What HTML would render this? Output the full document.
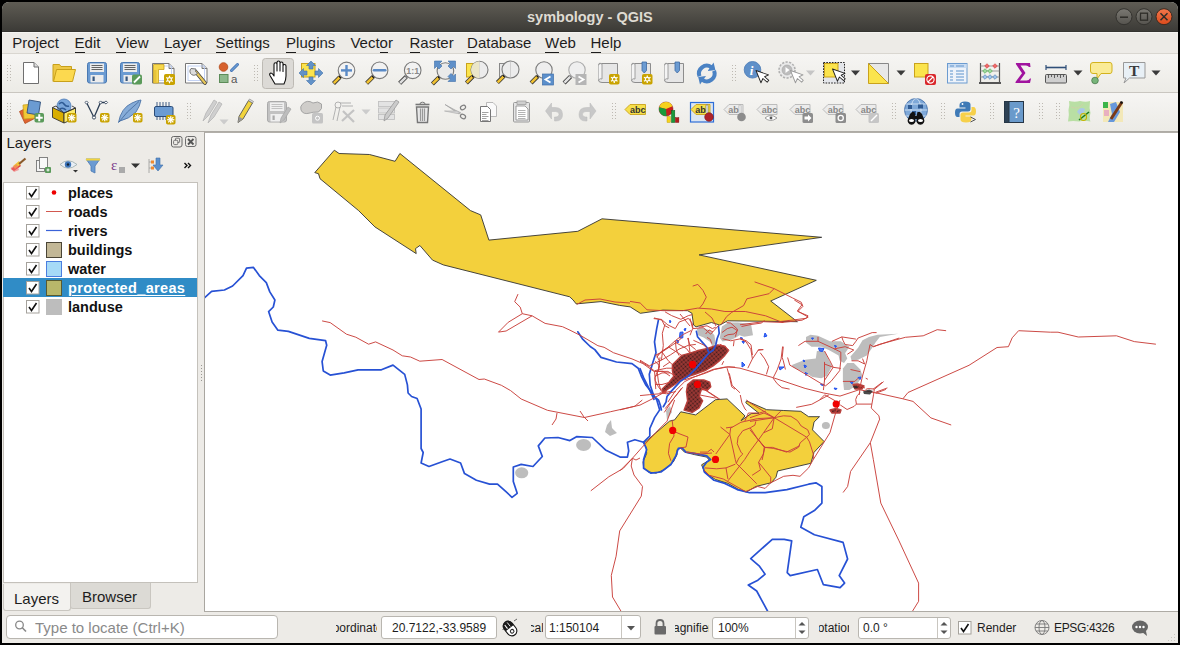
<!DOCTYPE html>
<html><head><meta charset="utf-8">
<style>
*{box-sizing:border-box}
html,body{margin:0;padding:0}
body{width:1180px;height:645px;background:#000;position:relative;overflow:hidden;font-family:"Liberation Sans",sans-serif;color:#1d1d1d}
.a{position:absolute}
.mi{position:absolute;top:35px;font-size:15px;line-height:15px;color:#1d1d1d;white-space:nowrap}
.mi u{text-decoration:none;position:relative}
.mi u:after{content:"";position:absolute;left:0;right:0;bottom:-3px;height:2px;background:#1d1d1d}
.tb{left:2px;width:1176px;height:38px;background:linear-gradient(#f6f5f3,#ecebe6)}
.lyr{left:68px;font-size:14.5px;line-height:15px;font-weight:bold;white-space:nowrap}
.box{background:#fff;border:1px solid #b9b6b0;border-radius:3px}
.st{font-size:12px;line-height:13px;white-space:nowrap;color:#1d1d1d}
svg{position:absolute;left:0;top:0;overflow:visible}
</style></head><body>
<div class="a" style="left:2px;top:2px;width:1176px;height:641px;background:#edebe7;border-radius:7px 7px 0 0"></div>
<div class="a" style="left:2px;top:2px;width:1176px;height:30px;border-radius:7px 7px 0 0;background:linear-gradient(#5f5c54,#3c3b37 96%,#2e2d2a)"></div>
<div class="a" style="left:2px;top:32px;width:1176px;height:1px;background:#f5f4f1"></div>
<div class="a" style="left:527px;top:10px;font-size:14.5px;line-height:15px;font-weight:bold;color:#dfdbd2">symbology - QGIS</div>
<span class="mi" style="left:12.2px">Pro<u>j</u>ect</span>
<span class="mi" style="left:74.6px"><u>E</u>dit</span>
<span class="mi" style="left:116.0px"><u>V</u>iew</span>
<span class="mi" style="left:164.0px"><u>L</u>ayer</span>
<span class="mi" style="left:215.6px"><u>S</u>ettings</span>
<span class="mi" style="left:286.1px"><u>P</u>lugins</span>
<span class="mi" style="left:350.4px">Vect<u>o</u>r</span>
<span class="mi" style="left:409.5px"><u>R</u>aster</span>
<span class="mi" style="left:467.1px"><u>D</u>atabase</span>
<span class="mi" style="left:545.0px"><u>W</u>eb</span>
<span class="mi" style="left:590.5px"><u>H</u>elp</span>

<div class="a" style="left:2px;top:53px;width:1176px;height:1px;background:#d9d6d0"></div>
<div class="a tb" style="top:54px"></div>
<div class="a" style="left:2px;top:92px;width:1176px;height:1px;background:#c9c6c0"></div>
<div class="a tb" style="top:93px"></div>
<div class="a" style="left:2px;top:131px;width:1176px;height:1px;background:#aeaba5"></div>

<div class="a" style="left:6.5px;top:134.5px;font-size:15px;line-height:15px;color:#1d1d1d">Layers</div>
<div class="a" style="left:3px;top:182px;width:195px;height:401px;background:#fff;border:1px solid #c4c1bb"></div>
<div class="a lyr" style="top:186px;color:#111;">places</div><div class="a lyr" style="top:205px;color:#111;">roads</div><div class="a lyr" style="top:224px;color:#111;">rivers</div><div class="a lyr" style="top:243px;color:#111;">buildings</div><div class="a lyr" style="top:262px;color:#111;">water</div><div class="a" style="left:3px;top:278px;width:194px;height:19px;background:#308cc6"></div><div class="a lyr" style="top:281px;color:#fff;text-decoration:underline;text-underline-offset:1.5px;text-decoration-thickness:1px;letter-spacing:0.35px;">protected_areas</div><div class="a lyr" style="top:300px;color:#111;">landuse</div>
<div class="a" style="left:3px;top:584px;width:68px;height:27px;background:#f3f2ef;border:1px solid #c9c6c0;border-top:none;border-radius:0 0 3px 3px"></div>
<div class="a" style="left:70px;top:583px;width:81px;height:26px;background:#dcdad5;border:1px solid #c9c6c0;border-top:none;border-radius:0 0 3px 3px"></div>
<div class="a" style="left:14px;top:590.5px;font-size:15px;line-height:15px">Layers</div>
<div class="a" style="left:82px;top:589px;font-size:15px;line-height:15px">Browser</div>

<div class="a" style="left:204px;top:132px;width:974px;height:480px;background:#fff;border-left:1px solid #a9a6a0;border-top:1px solid #b2afa9"></div>

<div class="a" style="left:204px;top:611px;width:974px;height:1px;background:#aeaba5"></div>
<div class="a box" style="left:6px;top:615px;width:272px;height:24px;border-radius:4px"></div>
<div class="a" style="left:35px;top:620px;font-size:15px;line-height:15px;color:#8a8a8a;white-space:nowrap">Type to locate (Ctrl+K)</div>
<div class="a st" style="left:336px;top:622px;width:41px;overflow:hidden"><span style="margin-left:-12px">Coordinate</span></div>
<div class="a box" style="left:381px;top:616px;width:116px;height:23px"></div>
<div class="a st" style="left:392px;top:622px">20.7122,-33.9589</div>
<div class="a st" style="left:531px;top:622px;width:12px;overflow:hidden"><span style="margin-left:-10.5px">Scale</span></div>
<div class="a box" style="left:545px;top:615px;width:96px;height:24px"></div>
<div class="a" style="left:621px;top:616px;width:1px;height:22px;background:#c9c6c0"></div>
<div class="a st" style="left:549px;top:622px">1:150104</div>
<div class="a st" style="left:675px;top:622px;width:34px;overflow:hidden"><span style="margin-left:-12px">Magnifier</span></div>
<div class="a box" style="left:712px;top:617px;width:97px;height:22px"></div>
<div class="a" style="left:795px;top:618px;width:1px;height:20px;background:#c9c6c0"></div>
<div class="a st" style="left:718px;top:622px">100%</div>
<div class="a st" style="left:819px;top:622px;width:30px;overflow:hidden"><span style="margin-left:-10px">Rotation</span></div>
<div class="a box" style="left:858px;top:617px;width:93px;height:22px"></div>
<div class="a" style="left:937px;top:618px;width:1px;height:20px;background:#c9c6c0"></div>
<div class="a st" style="left:863px;top:622px">0.0 °</div>
<div class="a st" style="left:977px;top:622px">Render</div>
<div class="a st" style="left:1054px;top:622px;letter-spacing:-0.35px">EPSG:4326</div>

<svg width="1180" height="645" viewBox="0 0 1180 645">
<defs><clipPath id="mapclip"><rect x="205" y="133" width="972" height="478"/></clipPath></defs>
<g clip-path="url(#mapclip)"><defs><pattern id="tp" width="3" height="3" patternUnits="userSpaceOnUse" patternTransform="rotate(-40)"><rect width="3" height="3" fill="#b8403c"/><rect x="0.5" y="0.5" width="2" height="2" fill="#3a1a1a"/></pattern></defs><path d="M696.8,328.6 L703.6,327.9 L710.3,330.6 L714.4,335.3 L715.8,343.5 L712.4,346.9 L710.3,342.1 L703.6,337.4 L698.1,335.3 Z" fill="#bdbdbd"/><path d="M721.9,326.5 L728.0,322.5 L737.5,322.5 L751.0,323.8 L753.0,335.3 L744.2,336.7 L739.5,335.3 L736.1,337.4 L730.7,340.1 L722.5,341.4 L719.8,337.9 Z" fill="#bdbdbd"/><path d="M806.0,336.9 L810.4,334.8 L818.0,335.8 L829.9,341.3 L840.8,341.3 L849.4,346.7 L845.1,353.2 L847.3,358.6 L844.0,363.0 L839.7,360.8 L838.6,355.4 L828.8,350.0 L821.2,346.7 L811.5,346.7 L806.0,342.4 Z" fill="#bdbdbd"/><path d="M791.9,365.1 L805.0,359.7 L815.8,358.6 L816.9,351.0 L824.5,351.0 L827.7,357.5 L832.1,366.2 L826.7,376.0 L821.2,378.2 L812.5,377.1 L805.0,372.7 L793.0,367.3 Z" fill="#bdbdbd"/><path d="M850.5,356.5 L858.1,347.8 L862.5,340.2 L869.0,336.9 L877.6,334.8 L898.3,333.7 L879.8,336.9 L875.5,342.4 L872.2,347.8 L866.8,355.4 L858.1,359.7 L851.6,360.8 Z" fill="#bdbdbd"/><path d="M842.9,368.4 L847.3,363.0 L853.8,363.0 L860.3,369.5 L862.5,376.0 L856.0,385.8 L849.4,390.1 L844.0,390.1 L842.9,379.3 Z" fill="#bdbdbd"/><path d="M607.0,425.0 L611.0,420.0 L612.0,428.0 L617.0,433.0 L610.0,436.0 L605.0,432.0 Z" fill="#bdbdbd"/><path d="M666.0,411.0 L670.0,406.0 L672.0,412.0 L667.0,420.0 Z" fill="#bdbdbd"/><ellipse cx="521.7" cy="472.8" rx="6.6" ry="5.5" fill="#bdbdbd"/><ellipse cx="583.6" cy="445.1" rx="7.5" ry="6" fill="#bdbdbd"/><ellipse cx="825.9" cy="425.4" rx="4" ry="3.5" fill="#bdbdbd"/><path d="M314.8,172.6 L334.3,150.2 L339.1,153.5 L369.5,154.5 L395.1,161.3 L399.9,153.5 L470.5,210.6 L480.7,214.9 L488.9,240.1 L577.8,231.3 L602.0,218.8 L821.7,237.3 L699.1,254.9 L816.3,280.3 L770.7,301.0 L797.4,321.7 L727.5,320.8 L719.8,325.1 L711.4,322.5 L696.1,326.8 L693.6,325.1 L691.9,313.2 L687.6,310.7 L663.0,310.1 L640.3,313.3 L630.2,306.9 L619.6,305.4 L601.0,301.6 L576.2,303.9 L573.1,300.0 L569.7,296.8 L443.3,264.9 L432.5,260.1 L419.9,245.5 L415.5,248.6 L416.2,253.6 L374.9,226.9 L358.6,210.6 L320.0,178.7 L318.5,173.7 Z" fill="#f3d03c" stroke="#333" stroke-width="0.9" stroke-linejoin="miter"/><path d="M643.6,443.4 L669.6,421.1 L674.6,419.9 L680.8,411.8 L695.7,414.9 L715.5,399.7 L727.1,398.9 L745.0,415.9 L741.1,420.6 L751.2,413.6 L759.0,413.3 L745.8,402.8 L746.5,400.9 L766.7,409.7 L783.8,410.5 L800.8,411.3 L808.6,416.7 L819.5,416.7 L814.0,422.1 L812.5,429.9 L824.1,441.5 L814.0,452.4 L810.9,463.3 L777.6,471.0 L776.0,477.2 L771.4,482.7 L755.8,486.5 L746.5,492.0 L738.8,489.6 L727.9,483.4 L715.5,479.5 L704.7,472.6 L701.6,464.8 L709.3,460.2 L706.8,457.1 L694.4,454.6 L684.5,452.1 L680.8,448.4 L677.1,449.6 L677.1,454.6 L673.3,462.0 L664.7,469.5 L656.0,473.2 L648.5,472.0 L643.6,467.6 L643.0,462.0 L646.7,453.3 L646.1,447.1 Z" fill="#f3d03c" stroke="#333" stroke-width="0.9"/><path d="M680.0,332.3 L683.0,332.0 L682.8,337.9 L679.5,338.0 Z" fill="#4a78f0" stroke="#1f4ff0" stroke-width="1"/><path d="M676.5,340.5 L678.5,340.5 L678.0,343.0 Z" fill="#4a78f0" stroke="#1f4ff0" stroke-width="1"/><path d="M684.0,329.0 L686.0,328.5 L685.0,331.0 Z" fill="#4a78f0" stroke="#1f4ff0" stroke-width="1"/><path d="M669.5,320.5 L671.0,321.0 L670.0,323.0 Z" fill="#4a78f0" stroke="#1f4ff0" stroke-width="1"/><path d="M740.5,337.5 L742.5,338.0 L741.5,340.0 Z" fill="#4a78f0" stroke="#1f4ff0" stroke-width="1"/><path d="M742.0,341.5 L744.5,341.5 L743.5,343.5 Z" fill="#4a78f0" stroke="#1f4ff0" stroke-width="1"/><path d="M765.0,333.0 L767.0,336.0 L764.0,337.0 Z" fill="#4a78f0" stroke="#1f4ff0" stroke-width="1"/><path d="M811.5,338.0 L813.5,338.0 L812.5,339.5 Z" fill="#4a78f0" stroke="#1f4ff0" stroke-width="1"/><path d="M818.5,348.0 L824.0,348.5 L822.5,351.5 L819.5,351.0 Z" fill="#4a78f0" stroke="#1f4ff0" stroke-width="1"/><path d="M834.5,345.5 L836.5,346.0 L835.5,347.5 Z" fill="#4a78f0" stroke="#1f4ff0" stroke-width="1"/><path d="M803.0,360.0 L805.0,361.0 L804.0,362.0 Z" fill="#4a78f0" stroke="#1f4ff0" stroke-width="1"/><path d="M804.0,365.0 L806.5,366.0 L805.0,368.0 Z" fill="#4a78f0" stroke="#1f4ff0" stroke-width="1"/><path d="M805.0,372.5 L807.5,373.5 L806.0,375.5 Z" fill="#4a78f0" stroke="#1f4ff0" stroke-width="1"/><path d="M820.5,384.0 L824.0,384.5 L822.5,386.0 Z" fill="#4a78f0" stroke="#1f4ff0" stroke-width="1"/><path d="M834.0,388.0 L837.0,388.5 L835.5,390.0 Z" fill="#4a78f0" stroke="#1f4ff0" stroke-width="1"/><path d="M850.0,381.5 L853.0,382.0 L852.0,384.0 Z" fill="#4a78f0" stroke="#1f4ff0" stroke-width="1"/><path d="M858.0,377.5 L861.0,377.0 L860.0,379.5 Z" fill="#4a78f0" stroke="#1f4ff0" stroke-width="1"/><path d="M742.0,362.0 L745.0,365.0 L742.0,367.0 Z" fill="#4a78f0" stroke="#1f4ff0" stroke-width="1"/><path d="M779.0,367.0 L784.0,367.0 L780.0,370.0 Z" fill="#4a78f0" stroke="#1f4ff0" stroke-width="1"/><path d="M672.4,364.7 L681.7,355.4 L689.9,353.1 L696.9,350.8 L707.3,348.5 L717.8,345.0 L724.8,346.1 L728.3,350.8 L724.8,355.4 L719.0,361.3 L713.1,365.9 L705.0,370.6 L695.7,374.0 L688.7,376.4 L680.6,379.9 L674.8,384.5 L667.8,389.2 L663.1,392.7 L662.0,389.2 L669.0,382.2 L673.6,376.4 L672.4,370.6 Z" fill="url(#tp)" stroke="#b8403c" stroke-width="1.4" stroke-linejoin="round"/><path d="M687.6,384.5 L693.4,379.9 L703.8,379.9 L709.7,382.2 L710.8,386.8 L707.3,390.3 L701.5,389.2 L699.2,396.1 L702.7,400.8 L699.2,407.8 L692.2,412.4 L684.1,410.1 L687.6,400.8 L686.4,391.5 Z" fill="url(#tp)" stroke="#b8403c" stroke-width="1.4" stroke-linejoin="round"/><path d="M830.0,410.0 L836.0,408.5 L841.0,410.0 L840.0,413.0 L832.0,413.0 Z" fill="url(#tp)" stroke="#b8403c" stroke-width="1.4" stroke-linejoin="round"/><path d="M853.0,384.5 L858.0,384.0 L864.0,386.0 L862.0,389.0 L855.0,389.0 Z" fill="url(#tp)" stroke="#b8403c" stroke-width="1.4" stroke-linejoin="round"/><path d="M204.7,297.7 L211.6,291.4 L224.4,290.0 L232.6,286.0 L243.0,275.6 L246.5,268.1 L253.5,267.4 L259.3,275.6 L266.3,282.6 L269.8,291.9 L274.9,300.0 L273.3,307.0 L268.6,311.6 L272.1,322.0 L277.9,330.2 L288.4,331.4 L309.3,338.4 L325.6,340.7 L326.7,345.3 L322.1,361.6 L323.3,371.0 L330.2,375.1 L344.2,372.8 L358.1,369.8 L381.4,369.8 L393.0,365.1 L404.7,374.4 L407.4,384.9 L408.1,393.0 L411.6,396.5 L417.1,398.5 L421.1,409.0 L421.1,448.5 L423.2,452.5 L421.1,463.0 L429.0,466.5 L442.1,461.7 L450.0,459.0 L460.6,463.0 L464.5,473.6 L476.4,480.2 L489.6,484.1 L497.5,484.1 L505.4,491.2 L512.0,497.3 L517.2,493.3 L513.3,481.5 L513.3,467.0 L521.2,464.4 L533.0,466.5 L542.3,456.5 L538.3,445.9 L544.9,438.0 L558.0,437.5 L569.9,440.6 L576.5,436.7 L592.3,437.5 L605.5,449.9 L620.0,457.1 L627.4,457.1 L628.7,450.9 L627.4,442.2 L634.9,439.7 L643.6,442.2" fill="none" stroke="#2751d4" stroke-width="1.7" stroke-linejoin="round" stroke-linecap="round"/><path d="M577.8,331.8 L582.4,338.8 L590.2,346.5 L594.8,349.6 L601.0,357.4 L616.5,362.0 L632.0,363.6 L638.2,368.2 L641.3,376.0 L646.0,385.3 L652.2,393.0 L656.8,400.0 L659.7,409.9 L654.7,417.4 L649.8,428.5 L649.8,436.0 L643.6,442.2" fill="none" stroke="#2751d4" stroke-width="1.7" stroke-linejoin="round" stroke-linecap="round"/><path d="M658.4,320.2 L656.7,328.6 L654.5,341.9 L656.0,352.7 L653.0,362.1 L649.3,374.2 L650.2,385.3 L654.0,396.5 L658.6,400.2 L660.5,405.8 L661.4,410.0" fill="none" stroke="#2751d4" stroke-width="1.7" stroke-linejoin="round" stroke-linecap="round"/><path d="M643.6,442.2 L646.7,449.6 L643.6,459.6 L643.6,468.2 L651.0,473.2 L660.9,472.0 L670.9,464.5 L675.8,455.8 L678.3,448.4 L682.0,447.8 L685.8,452.1 L694.4,453.3 L706.8,455.8 L710.6,459.6 L706.8,462.0 L703.1,467.0 L704.4,472.0 L714.0,480.3 L724.8,483.4 L737.2,489.6 L749.6,492.7 L765.2,492.7 L786.9,489.6 L808.6,484.2 L815.9,482.8 L821.9,486.5 L821.9,503.1 L814.4,510.6 L803.8,516.7 L800.8,527.3 L814.4,534.8 L843.1,542.4 L847.6,559.0 L839.2,575.6 L844.6,583.1 L840.1,587.7 L823.4,584.7 L817.4,569.5 L790.2,575.6 L787.2,572.6 L791.7,540.8 L784.2,539.3 L772.3,539.3 L750.7,558.6 L759.1,565.8 L765.1,574.2 L757.9,580.2 L748.3,585.0 L756.7,591.0 L767.5,611.0" fill="none" stroke="#2751d4" stroke-width="1.7" stroke-linejoin="round" stroke-linecap="round"/><path d="M696.4,331.3 L697.5,336.7 L702.2,342.1 L707.0,347.5 L708.3,351.6" fill="none" stroke="#2751d4" stroke-width="1.7" stroke-linejoin="round" stroke-linecap="round"/><path d="M718.5,326.5 L719.2,333.3 L717.1,338.7 L715.8,344.8 L713.1,350.3 L709.0,353.0 L705.1,357.4 L695.8,368.6 L688.4,376.0 L680.0,381.6 L670.7,391.9 L667.0,396.5 L666.0,402.1 L663.3,406.7" fill="none" stroke="#2751d4" stroke-width="1.7" stroke-linejoin="round" stroke-linecap="round"/><path d="M640.0,368.6 L643.7,377.9 L649.3,389.1 L654.0,399.3" fill="none" stroke="#2751d4" stroke-width="1.7" stroke-linejoin="round" stroke-linecap="round"/><path d="M322.1,320.9 L330.2,322.6 L346.5,334.2 L355.8,337.2 L368.6,344.2 L375.6,341.9 L393.0,350.0 L402.3,355.8 L410.5,357.0 L419.8,361.2 L442.1,359.5 L479.0,379.5 L484.3,379.0 L501.4,385.3 L510.6,390.6 L521.2,399.0 L547.5,410.3 L584.4,417.5 L610.7,411.7 L640.0,405.1 L654.0,398.0 L663.0,393.0 L670.0,391.5" fill="none" stroke="#c9403b" stroke-width="0.95" stroke-linejoin="round"/><path d="M518.0,294.1 L514.7,301.7 L520.2,307.1 L522.3,313.7 L532.1,315.8 L545.1,323.4 L562.5,326.7 L570.0,330.2 L580.9,335.7 L597.9,345.7 L604.1,347.3 L613.4,352.7 L632.0,358.9 L642.9,363.6 L653.7,371.3 L663.0,371.3 L670.0,376.0" fill="none" stroke="#c9403b" stroke-width="0.95" stroke-linejoin="round"/><path d="M522.3,313.7 L508.2,322.3 L498.5,332.1 L506.1,331.0 L532.1,315.8" fill="none" stroke="#c9403b" stroke-width="0.95" stroke-linejoin="round"/><path d="M552.0,425.0 L556.0,419.0 L557.0,413.0" fill="none" stroke="#c9403b" stroke-width="0.95" stroke-linejoin="round"/><path d="M580.0,411.0 L584.0,417.0 L588.0,421.0" fill="none" stroke="#c9403b" stroke-width="0.95" stroke-linejoin="round"/><path d="M667.9,402.1 L675.3,390.9 L684.7,381.6 L694.0,377.0 L705.1,373.3 L714.4,369.5 L728.4,366.7 L740.0,368.2 L772.6,377.5 L805.1,388.4 L823.7,393.0 L840.0,396.1 L859.3,389.7 L880.0,393.7 L902.9,398.8 L913.0,401.4 L930.9,417.9 L951.2,425.0" fill="none" stroke="#c9403b" stroke-width="0.95" stroke-linejoin="round"/><path d="M665.1,408.6 L675.3,396.5 L682.8,387.2" fill="none" stroke="#c9403b" stroke-width="0.95" stroke-linejoin="round"/><path d="M640.0,395.6 L649.3,394.7 L660.5,393.7 L667.0,390.9" fill="none" stroke="#c9403b" stroke-width="0.95" stroke-linejoin="round"/><path d="M640.0,361.2 L649.3,366.7 L654.9,371.4 L667.9,371.4 L675.3,376.0" fill="none" stroke="#c9403b" stroke-width="0.95" stroke-linejoin="round"/><path d="M902.9,398.8 L908.0,392.5 L969.0,365.3 L997.0,347.5 L1008.4,346.7 L1012.2,337.8 L1018.6,330.7 L1050.4,332.2 L1058.0,332.2 L1078.3,337.0 L1116.5,335.8 L1134.3,341.6 L1155.9,344.2" fill="none" stroke="#c9403b" stroke-width="0.95" stroke-linejoin="round"/><path d="M674.6,400.0 L667.1,421.1 L656.0,432.3 L642.3,447.1 L632.4,458.3 L620.0,470.7" fill="none" stroke="#c9403b" stroke-width="0.95" stroke-linejoin="round"/><path d="M632.4,458.3 L631.2,466.0 L634.0,475.0 L642.5,486.4 L641.3,496.1 L619.7,530.9 L616.1,556.2 L611.3,575.4 L612.5,597.0 L620.9,611.0" fill="none" stroke="#c9403b" stroke-width="0.95" stroke-linejoin="round"/><path d="M590.8,490.8 L608.8,476.8 L623.3,468.4 L632.4,458.3" fill="none" stroke="#c9403b" stroke-width="0.95" stroke-linejoin="round"/><path d="M632.4,458.3 L636.0,460.0 L640.0,458.0" fill="none" stroke="#c9403b" stroke-width="0.95" stroke-linejoin="round"/><path d="M620.0,409.9 L634.9,406.2 L642.3,400.0" fill="none" stroke="#c9403b" stroke-width="0.95" stroke-linejoin="round"/><path d="M879.3,420.0 L870.3,442.7 L850.6,471.4 L847.6,486.5 L843.1,492.5" fill="none" stroke="#c9403b" stroke-width="0.95" stroke-linejoin="round"/><path d="M870.3,442.7 L873.3,459.3 L880.8,503.1 L899.0,540.8 L918.6,583.1 L918.6,601.3 L912.6,611.0" fill="none" stroke="#c9403b" stroke-width="0.95" stroke-linejoin="round"/><path d="M813.3,459.5 L830.0,432.6 L835.0,415.0 L840.0,400.0" fill="none" stroke="#c9403b" stroke-width="0.95" stroke-linejoin="round"/><path d="M796.2,407.4 L811.7,404.3 L828.8,395.0" fill="none" stroke="#c9403b" stroke-width="0.95" stroke-linejoin="round"/><path d="M700.0,395.0 L715.5,398.1" fill="none" stroke="#c9403b" stroke-width="0.95" stroke-linejoin="round"/><path d="M740.3,395.0 L741.9,402.8 L745.0,409.0 L746.5,410.5" fill="none" stroke="#c9403b" stroke-width="0.95" stroke-linejoin="round"/><path d="M630.0,301.4 L640.2,303.0 L647.0,309.8 L663.9,310.7 L682.5,310.7 L697.8,308.1 L711.4,309.0 L724.9,311.5 L745.3,311.5 L765.6,315.8 L782.5,322.5" fill="none" stroke="#c9403b" stroke-width="0.95" stroke-linejoin="round"/><path d="M692.7,286.1 L697.8,284.4 L702.9,290.3 L706.3,297.1 L702.9,303.9 L699.5,308.1" fill="none" stroke="#c9403b" stroke-width="0.95" stroke-linejoin="round"/><path d="M754.6,281.9 L774.1,288.6 L769.0,293.7 L746.9,298.8 L743.6,305.6 L731.7,312.4 L726.6,316.6 L721.5,324.2" fill="none" stroke="#c9403b" stroke-width="0.95" stroke-linejoin="round"/><path d="M774.1,288.6 L792.7,298.0 L801.2,302.2 L802.9,306.4 L797.8,311.5 L808.0,315.8 L806.3,318.3 L779.2,321.7" fill="none" stroke="#c9403b" stroke-width="0.95" stroke-linejoin="round"/><path d="M576.8,304.4 L585.0,300.0 L600.0,299.0 L615.0,302.0 L630.0,303.0" fill="none" stroke="#c9403b" stroke-width="0.95" stroke-linejoin="round"/><path d="M794.3,300.0 L802.0,304.7 L797.4,310.9 L808.2,317.1 L802.0,320.2 L781.9,322.5" fill="none" stroke="#c9403b" stroke-width="0.95" stroke-linejoin="round"/><path d="M740.0,324.8 L763.3,321.7 L783.4,322.5" fill="none" stroke="#c9403b" stroke-width="0.95" stroke-linejoin="round"/><path d="M705.0,312.0 L712.0,318.0 L716.0,326.0" fill="none" stroke="#c9403b" stroke-width="0.95" stroke-linejoin="round"/><path d="M680.0,314.0 L685.0,320.0 L690.0,326.0" fill="none" stroke="#c9403b" stroke-width="0.95" stroke-linejoin="round"/><path d="M780.7,411.2 L774.2,417.7 L758.4,440.0 L750.0,451.2 L744.7,459.5 L727.9,480.9" fill="none" stroke="#c9403b" stroke-width="0.95" stroke-linejoin="round"/><path d="M746.5,400.0 L750.0,402.8 L774.2,417.7 L806.7,437.2 L809.5,441.9 L813.3,454.0 L813.3,459.5" fill="none" stroke="#c9403b" stroke-width="0.95" stroke-linejoin="round"/><path d="M774.2,417.7 L783.5,415.8 L790.9,416.3 L797.4,420.5 L801.2,426.0 L807.7,429.8 L809.5,434.4 L806.7,437.2 L800.2,442.8 L798.4,447.4 L790.0,452.1 L785.3,451.2 L773.3,448.4 L764.9,447.4 L758.4,440.0 L750.0,429.8" fill="none" stroke="#c9403b" stroke-width="0.95" stroke-linejoin="round"/><path d="M750.0,421.4 L774.2,417.7" fill="none" stroke="#c9403b" stroke-width="0.95" stroke-linejoin="round"/><path d="M750.0,417.7 L764.0,413.0 L774.2,417.7" fill="none" stroke="#c9403b" stroke-width="0.95" stroke-linejoin="round"/><path d="M764.9,447.4 L762.1,460.0" fill="none" stroke="#c9403b" stroke-width="0.95" stroke-linejoin="round"/><path d="M774.2,417.7 L772.3,428.8 L764.0,432.6" fill="none" stroke="#c9403b" stroke-width="0.95" stroke-linejoin="round"/><path d="M720.5,427.0 L729.8,434.4 L730.7,427.9 L732.6,427.0 L740.9,422.3 L744.7,421.4 L757.7,418.6 L774.2,417.7" fill="none" stroke="#c9403b" stroke-width="0.95" stroke-linejoin="round"/><path d="M726.0,427.9 L732.6,427.0" fill="none" stroke="#c9403b" stroke-width="0.95" stroke-linejoin="round"/><path d="M729.8,434.4 L735.3,459.5 L736.3,463.3 L756.7,483.7" fill="none" stroke="#c9403b" stroke-width="0.95" stroke-linejoin="round"/><path d="M744.7,421.4 L748.4,413.0 L759.5,413.0 L766.0,411.0" fill="none" stroke="#c9403b" stroke-width="0.95" stroke-linejoin="round"/><path d="M755.8,421.4 L754.9,425.1 L750.2,427.9 L742.8,430.7 L738.1,437.2 L737.2,443.7 L740.9,452.1 L742.8,454.0 L739.1,457.7 L736.3,463.3" fill="none" stroke="#c9403b" stroke-width="0.95" stroke-linejoin="round"/><path d="M750.2,427.9 L757.7,439.1 L765.1,447.4" fill="none" stroke="#c9403b" stroke-width="0.95" stroke-linejoin="round"/><path d="M758.6,440.0 L764.2,447.4 L763.3,454.0 L758.6,462.3 L760.5,469.8 L752.1,475.3" fill="none" stroke="#c9403b" stroke-width="0.95" stroke-linejoin="round"/><path d="M764.2,447.4 L772.6,447.4 L786.5,452.1 L800.0,445.6" fill="none" stroke="#c9403b" stroke-width="0.95" stroke-linejoin="round"/><path d="M758.6,462.3 L770.7,477.2 L770.7,482.8" fill="none" stroke="#c9403b" stroke-width="0.95" stroke-linejoin="round"/><path d="M715.8,454.0 L729.8,434.4" fill="none" stroke="#c9403b" stroke-width="0.95" stroke-linejoin="round"/><path d="M700.0,452.1 L707.4,452.1 L711.2,449.3 L714.0,452.0" fill="none" stroke="#c9403b" stroke-width="0.95" stroke-linejoin="round"/><path d="M704.7,467.9 L716.7,468.8 L726.0,467.9 L735.3,464.2" fill="none" stroke="#c9403b" stroke-width="0.95" stroke-linejoin="round"/><path d="M726.0,467.9 L727.9,479.0" fill="none" stroke="#c9403b" stroke-width="0.95" stroke-linejoin="round"/><path d="M703.7,469.8 L709.3,475.3 L723.3,479.0 L745.6,491.6" fill="none" stroke="#c9403b" stroke-width="0.95" stroke-linejoin="round"/><path d="M745.6,491.6 L757.7,486.5 L765.1,488.4 L770.7,482.8 L783.7,476.3 L793.0,475.3 L800.0,476.3 L808.6,467.9 L813.3,459.5" fill="none" stroke="#c9403b" stroke-width="0.95" stroke-linejoin="round"/><path d="M672.1,419.9 L673.3,429.8 L674.0,436.0 L669.6,443.4 L668.4,453.3 L670.9,460.8" fill="none" stroke="#c9403b" stroke-width="0.95" stroke-linejoin="round"/><path d="M673.0,431.0 L680.0,434.0 L688.0,437.0 L686.0,447.0 L680.0,448.0" fill="none" stroke="#c9403b" stroke-width="0.95" stroke-linejoin="round"/><path d="M686.0,452.0 L700.0,454.0 L712.0,453.0" fill="none" stroke="#c9403b" stroke-width="0.95" stroke-linejoin="round"/><path d="M653.7,318.6 L661.5,319.4 L664.6,325.6 L669.2,327.9" fill="none" stroke="#c9403b" stroke-width="0.95" stroke-linejoin="round"/><path d="M654.0,317.9 L662.3,320.2 L667.9,324.9 L675.3,328.6 L679.1,322.1 L688.4,318.4 L692.1,323.0 L693.0,328.6 L703.3,327.7 L710.7,334.2 L719.1,324.9" fill="none" stroke="#c9403b" stroke-width="0.95" stroke-linejoin="round"/><path d="M665.1,311.9 L671.6,315.6 L680.9,319.3 L688.4,315.6 L692.1,314.7" fill="none" stroke="#c9403b" stroke-width="0.95" stroke-linejoin="round"/><path d="M656.7,355.6 L667.9,347.2 L675.3,340.7 L683.7,334.2 L691.2,330.5" fill="none" stroke="#c9403b" stroke-width="0.95" stroke-linejoin="round"/><path d="M640.0,360.2 L649.3,365.8 L661.4,360.2 L670.7,354.7 L679.1,349.1 L688.4,345.3 L695.8,344.4" fill="none" stroke="#c9403b" stroke-width="0.95" stroke-linejoin="round"/><path d="M661.4,360.2 L663.3,345.3 L662.3,333.3 L665.1,324.0" fill="none" stroke="#c9403b" stroke-width="0.95" stroke-linejoin="round"/><path d="M675.3,340.7 L676.3,350.0 L679.1,355.6" fill="none" stroke="#c9403b" stroke-width="0.95" stroke-linejoin="round"/><path d="M688.4,337.9 L689.3,347.2 L690.2,353.7" fill="none" stroke="#c9403b" stroke-width="0.95" stroke-linejoin="round"/><path d="M656.8,357.4 L661.5,351.2 L670.0,346.5" fill="none" stroke="#c9403b" stroke-width="0.95" stroke-linejoin="round"/><path d="M660.0,357.4 L658.4,371.3" fill="none" stroke="#c9403b" stroke-width="0.95" stroke-linejoin="round"/><path d="M663.0,366.7 L670.0,362.0" fill="none" stroke="#c9403b" stroke-width="0.95" stroke-linejoin="round"/><path d="M654.5,371.3 L655.3,380.6 L658.4,386.8 L663.0,393.0" fill="none" stroke="#c9403b" stroke-width="0.95" stroke-linejoin="round"/><path d="M656.7,355.6 L659.5,361.2 L658.6,368.6 L654.9,377.9 L655.8,389.1" fill="none" stroke="#c9403b" stroke-width="0.95" stroke-linejoin="round"/><path d="M729.3,373.3 L732.1,385.3 L740.0,392.8" fill="none" stroke="#c9403b" stroke-width="0.95" stroke-linejoin="round"/><path d="M700.5,387.2 L707.0,390.9 L720.0,399.3" fill="none" stroke="#c9403b" stroke-width="0.95" stroke-linejoin="round"/><path d="M723.7,361.2 L721.9,364.9" fill="none" stroke="#c9403b" stroke-width="0.95" stroke-linejoin="round"/><path d="M655.0,355.4 L662.0,352.0 L669.0,347.3 L675.9,342.7 L681.7,338.0" fill="none" stroke="#c9403b" stroke-width="0.95" stroke-linejoin="round"/><path d="M662.0,352.0 L667.8,360.1 L672.4,364.7" fill="none" stroke="#c9403b" stroke-width="0.95" stroke-linejoin="round"/><path d="M669.0,347.3 L678.3,353.1 L681.7,355.4" fill="none" stroke="#c9403b" stroke-width="0.95" stroke-linejoin="round"/><path d="M675.9,342.7 L686.4,348.5 L689.9,353.1" fill="none" stroke="#c9403b" stroke-width="0.95" stroke-linejoin="round"/><path d="M687.6,338.0 L689.9,345.0 L695.7,349.6" fill="none" stroke="#c9403b" stroke-width="0.95" stroke-linejoin="round"/><path d="M693.4,340.3 L703.8,345.0 L707.3,348.5" fill="none" stroke="#c9403b" stroke-width="0.95" stroke-linejoin="round"/><path d="M655.0,370.6 L666.6,368.2 L673.6,368.2" fill="none" stroke="#c9403b" stroke-width="0.95" stroke-linejoin="round"/><path d="M655.0,376.4 L662.0,372.9 L670.1,372.9" fill="none" stroke="#c9403b" stroke-width="0.95" stroke-linejoin="round"/><path d="M655.0,384.5 L662.0,384.5 L670.1,382.2" fill="none" stroke="#c9403b" stroke-width="0.95" stroke-linejoin="round"/><path d="M659.7,392.7 L666.6,393.8 L675.9,391.5" fill="none" stroke="#c9403b" stroke-width="0.95" stroke-linejoin="round"/><path d="M655.0,361.3 L659.7,365.9 L657.3,372.9 L658.5,382.2 L660.8,390.3" fill="none" stroke="#c9403b" stroke-width="0.95" stroke-linejoin="round"/><path d="M684.1,379.9 L695.7,376.4 L713.1,369.4 L724.8,367.1 L735.0,367.1" fill="none" stroke="#c9403b" stroke-width="0.95" stroke-linejoin="round"/><path d="M664.3,412.4 L673.6,398.5 L681.7,388.0" fill="none" stroke="#c9403b" stroke-width="0.95" stroke-linejoin="round"/><path d="M727.1,368.2 L729.4,376.4 L731.7,386.8 L735.0,389.2" fill="none" stroke="#c9403b" stroke-width="0.95" stroke-linejoin="round"/><path d="M703.8,389.2 L717.8,398.5" fill="none" stroke="#c9403b" stroke-width="0.95" stroke-linejoin="round"/><path d="M690.0,318.4 L692.7,328.6 L690.0,335.3" fill="none" stroke="#c9403b" stroke-width="0.95" stroke-linejoin="round"/><path d="M698.8,327.2 L707.0,325.8 L712.4,328.6 L715.8,327.2" fill="none" stroke="#c9403b" stroke-width="0.95" stroke-linejoin="round"/><path d="M705.6,334.0 L709.0,329.9 L713.0,332.0" fill="none" stroke="#c9403b" stroke-width="0.95" stroke-linejoin="round"/><path d="M707.0,337.4 L710.3,339.4 L711.7,343.5" fill="none" stroke="#c9403b" stroke-width="0.95" stroke-linejoin="round"/><path d="M721.9,332.6 L727.3,328.6 L732.0,327.2 L737.5,330.6 L734.1,334.0 L728.0,334.7 L723.9,336.7" fill="none" stroke="#c9403b" stroke-width="0.95" stroke-linejoin="round"/><path d="M722.5,338.7 L730.7,340.8 L740.8,338.7 L746.3,340.8 L751.0,344.8 L752.4,355.0" fill="none" stroke="#c9403b" stroke-width="0.95" stroke-linejoin="round"/><path d="M726.6,322.5 L730.7,323.1 L737.5,329.2 L735.4,336.7" fill="none" stroke="#c9403b" stroke-width="0.95" stroke-linejoin="round"/><path d="M734.1,340.8 L733.4,346.2" fill="none" stroke="#c9403b" stroke-width="0.95" stroke-linejoin="round"/><path d="M764.6,320.4 L761.2,323.1 L751.0,324.5 L741.5,326.5" fill="none" stroke="#c9403b" stroke-width="0.95" stroke-linejoin="round"/><path d="M719.8,344.2 L725.3,346.9 L729.3,350.3" fill="none" stroke="#c9403b" stroke-width="0.95" stroke-linejoin="round"/><path d="M757.8,350.3 L763.2,349.6" fill="none" stroke="#c9403b" stroke-width="0.95" stroke-linejoin="round"/><path d="M798.4,345.6 L805.0,341.3 L818.0,341.3 L832.1,347.8 L840.8,352.1 L840.8,360.8 L839.7,370.6 L831.0,381.4 L825.6,385.8" fill="none" stroke="#c9403b" stroke-width="0.95" stroke-linejoin="round"/><path d="M818.0,336.9 L818.0,341.3" fill="none" stroke="#c9403b" stroke-width="0.95" stroke-linejoin="round"/><path d="M832.1,341.3 L841.8,336.9 L842.9,340.2 L845.1,344.5 L852.7,345.6 L855.9,341.3 L858.1,338.0 L872.2,332.6 L876.6,332.6" fill="none" stroke="#c9403b" stroke-width="0.95" stroke-linejoin="round"/><path d="M841.8,336.9 L855.9,339.1" fill="none" stroke="#c9403b" stroke-width="0.95" stroke-linejoin="round"/><path d="M834.2,348.9 L845.1,346.7 L853.8,350.0 L847.3,354.3" fill="none" stroke="#c9403b" stroke-width="0.95" stroke-linejoin="round"/><path d="M824.5,351.0 L829.9,360.8 L833.2,367.3 L824.5,380.3 L823.4,390.1" fill="none" stroke="#c9403b" stroke-width="0.95" stroke-linejoin="round"/><path d="M824.5,361.9 L824.5,381.4" fill="none" stroke="#c9403b" stroke-width="0.95" stroke-linejoin="round"/><path d="M824.5,364.0 L833.2,367.3 L840.8,368.4" fill="none" stroke="#c9403b" stroke-width="0.95" stroke-linejoin="round"/><path d="M899.3,338.0 L873.3,346.7 L870.0,344.5 L866.8,360.8 L862.5,376.0 L860.3,385.8 L859.2,395.0" fill="none" stroke="#c9403b" stroke-width="0.95" stroke-linejoin="round"/><path d="M851.6,360.8 L858.1,360.8 L864.6,364.0 L862.5,358.6" fill="none" stroke="#c9403b" stroke-width="0.95" stroke-linejoin="round"/><path d="M850.5,369.5 L860.3,371.7" fill="none" stroke="#c9403b" stroke-width="0.95" stroke-linejoin="round"/><path d="M842.9,381.4 L854.9,381.4 L858.1,378.2" fill="none" stroke="#c9403b" stroke-width="0.95" stroke-linejoin="round"/><path d="M787.6,357.5 L789.8,365.1 L805.0,373.8 L821.2,383.6 L825.6,385.8" fill="none" stroke="#c9403b" stroke-width="0.95" stroke-linejoin="round"/><path d="M783.3,346.7 L782.2,357.5 L783.3,360.8 L785.4,369.5" fill="none" stroke="#c9403b" stroke-width="0.95" stroke-linejoin="round"/><path d="M882.0,382.5 L873.3,389.0" fill="none" stroke="#c9403b" stroke-width="0.95" stroke-linejoin="round"/><path d="M887.4,387.9 L875.5,392.3" fill="none" stroke="#c9403b" stroke-width="0.95" stroke-linejoin="round"/><path d="M865.7,378.2 L867.9,379.3" fill="none" stroke="#c9403b" stroke-width="0.95" stroke-linejoin="round"/><path d="M873.3,346.7 L880.0,344.2 L905.4,337.3 L923.2,335.8 L937.2,329.7 L946.1,330.7" fill="none" stroke="#c9403b" stroke-width="0.95" stroke-linejoin="round"/><path d="M840.2,404.9 L847.1,409.5 L854.1,406.4 L856.4,404.1 L871.9,404.1 L873.5,394.8 L874.3,389.4 L883.6,381.6" fill="none" stroke="#c9403b" stroke-width="0.95" stroke-linejoin="round"/><path d="M856.4,404.1 L855.7,399.5 L857.2,395.6 L860.3,392.5" fill="none" stroke="#c9403b" stroke-width="0.95" stroke-linejoin="round"/><path d="M871.9,404.1 L871.2,408.0 L878.9,415.7 L879.7,420.0" fill="none" stroke="#c9403b" stroke-width="0.95" stroke-linejoin="round"/><path d="M885.9,389.4 L875.8,393.3" fill="none" stroke="#c9403b" stroke-width="0.95" stroke-linejoin="round"/><path d="M865.7,389.4 L868.1,388.6 L874.3,389.0" fill="none" stroke="#c9403b" stroke-width="0.95" stroke-linejoin="round"/><path d="M820.0,399.5 L824.7,394.8 L835.5,401.0" fill="none" stroke="#c9403b" stroke-width="0.95" stroke-linejoin="round"/><path d="M853.0,385.0 L860.0,386.0 L865.0,388.0" fill="none" stroke="#c9403b" stroke-width="0.95" stroke-linejoin="round"/><path d="M747.8,368.2 L752.4,358.9 L758.6,349.6 L763.3,349.6" fill="none" stroke="#c9403b" stroke-width="0.95" stroke-linejoin="round"/><path d="M740.0,338.8 L746.2,341.9 L750.9,349.6 L752.4,358.9" fill="none" stroke="#c9403b" stroke-width="0.95" stroke-linejoin="round"/><path d="M760.2,352.7 L764.8,358.9 L768.7,366.7 L766.4,374.4" fill="none" stroke="#c9403b" stroke-width="0.95" stroke-linejoin="round"/><path d="M782.6,346.5 L781.1,358.9 L777.2,369.8 L773.3,377.5" fill="none" stroke="#c9403b" stroke-width="0.95" stroke-linejoin="round"/><path d="M772.6,377.5 L777.2,383.7 L781.9,387.6 L789.6,389.1" fill="none" stroke="#c9403b" stroke-width="0.95" stroke-linejoin="round"/><path d="M863.0,391.5 L869.0,389.5 L873.0,391.0 L870.0,394.5 L864.0,394.0 Z" fill="#2a2a2a" opacity="0.85"/><path d="M853.0,386.0 L857.0,385.5 L858.0,388.0 L854.0,388.5 Z" fill="#2a2a2a" opacity="0.85"/><circle cx="692.6" cy="364.4" r="3.6" fill="#f00000"/><circle cx="697.5" cy="384.4" r="3.6" fill="#f00000"/><circle cx="672.7" cy="430.4" r="3.6" fill="#f00000"/><circle cx="715.5" cy="459.4" r="3.6" fill="#f00000"/><circle cx="836.2" cy="404.1" r="3.6" fill="#f00000"/></g>
<rect x="7" y="65" width="1" height="1" fill="#bdb9b2"/><rect x="10" y="65" width="1" height="1" fill="#bdb9b2"/><rect x="7" y="68" width="1" height="1" fill="#bdb9b2"/><rect x="10" y="68" width="1" height="1" fill="#bdb9b2"/><rect x="7" y="71" width="1" height="1" fill="#bdb9b2"/><rect x="10" y="71" width="1" height="1" fill="#bdb9b2"/><rect x="7" y="74" width="1" height="1" fill="#bdb9b2"/><rect x="10" y="74" width="1" height="1" fill="#bdb9b2"/><rect x="7" y="77" width="1" height="1" fill="#bdb9b2"/><rect x="10" y="77" width="1" height="1" fill="#bdb9b2"/><rect x="7" y="80" width="1" height="1" fill="#bdb9b2"/><rect x="10" y="80" width="1" height="1" fill="#bdb9b2"/><path d="M23.5,62.5 H34 L38.5,67 V83.5 H23.5 Z" fill="#fff" stroke="#6f6f6f"/><path d="M34,62.5 V67 H38.5" fill="#ddd" stroke="#6f6f6f"/><path d="M53,81.5 V64.5 H59.5 L61,66.5 H71.5 V69.5" fill="#eec846" stroke="#c8a01a"/><path d="M53.5,81.5 L56.5,69.5 H75.5 L72.5,81.5 Z" fill="#fcd94f" stroke="#c8a01a"/><rect x="87.5" y="62.5" width="19" height="20.5" rx="2" fill="#6b9bd2" stroke="#4a79b2"/><rect x="90" y="63.5" width="14" height="8.5" fill="#ececec"/><line x1="91.5" y1="65.5" x2="102.5" y2="65.5" stroke="#555" stroke-width="0.9"/><line x1="91.5" y1="67.5" x2="102.5" y2="67.5" stroke="#555" stroke-width="0.9"/><line x1="91.5" y1="69.5" x2="102.5" y2="69.5" stroke="#555" stroke-width="0.9"/><rect x="90.5" y="75" width="13" height="7.5" fill="#ececec"/><rect x="92.5" y="76.5" width="2.2" height="4.5" fill="#37577f"/><rect x="120.5" y="62.5" width="19" height="20.5" rx="2" fill="#6b9bd2" stroke="#4a79b2"/><rect x="123" y="63.5" width="14" height="8.5" fill="#ececec"/><line x1="124.5" y1="65.5" x2="135.5" y2="65.5" stroke="#555" stroke-width="0.9"/><line x1="124.5" y1="67.5" x2="135.5" y2="67.5" stroke="#555" stroke-width="0.9"/><line x1="124.5" y1="69.5" x2="135.5" y2="69.5" stroke="#555" stroke-width="0.9"/><rect x="123.5" y="75" width="13" height="7.5" fill="#ececec"/><rect x="125.5" y="76.5" width="2.2" height="4.5" fill="#37577f"/><rect x="132" y="74.5" width="10" height="10" rx="1.8" fill="#5a9a5a"/><line x1="134.0" y1="82.5" x2="140.0" y2="76.5" stroke="#fff" stroke-width="1.8"/><path d="M152.5,63.5 H169 L174,68.5 V83 H152.5 Z" fill="#fff" stroke="#777"/><path d="M169,63.5 V68.5 H174" fill="#ddd" stroke="#777"/><rect x="155" y="66" width="16.5" height="14.5" fill="none" stroke="#b5c8f0" stroke-width="0.8"/><path d="M153.5,64.5 H164 V69.5 H158.5 V83 H153.5 Z" fill="#f7d84c" stroke="#c9a21c" stroke-width="0.8"/><g stroke="#c9a21c" stroke-width="0.7"><line x1="154" y1="71" x2="156.5" y2="71"/><line x1="154" y1="73" x2="156.5" y2="73"/><line x1="154" y1="75" x2="156.5" y2="75"/><line x1="154" y1="77" x2="156.5" y2="77"/><line x1="154" y1="79" x2="156.5" y2="79"/><line x1="154" y1="81" x2="156.5" y2="81"/></g><rect x="164" y="74" width="11" height="11" rx="1.8" fill="#c9a300"/><g stroke="#fff" stroke-width="1.2"><line x1="169.5" y1="75.7" x2="169.5" y2="83.3"/><line x1="166.2" y1="77.6" x2="172.8" y2="81.4"/><line x1="166.2" y1="81.4" x2="172.8" y2="77.6"/></g><circle cx="169.5" cy="79.5" r="1.9" fill="#c9a300" stroke="#fff" stroke-width="1.1"/><path d="M185.5,63.5 H202 L207,68.5 V83 H185.5 Z" fill="#fff" stroke="#777"/><path d="M202,63.5 V68.5 H207" fill="#ddd" stroke="#777"/><rect x="188" y="66" width="16.5" height="14.5" fill="none" stroke="#b5c8f0" stroke-width="0.8"/><line x1="196" y1="72" x2="205" y2="83" stroke="#444" stroke-width="3.6" stroke-linecap="round"/><line x1="196" y1="72" x2="205" y2="83" stroke="#e8c85a" stroke-width="2.2" stroke-linecap="round"/><path d="M191,68.5 A4,4 0 1 0 197.5,73 L195.5,71.5 L196,69 Z" fill="#ddd" stroke="#666" stroke-width="0.9"/><circle cx="223.5" cy="67" r="4.3" fill="#d7612d" stroke="#b44b1c" stroke-width="0.8"/><line x1="231.5" y1="70.5" x2="237.5" y2="64.5" stroke="#3d6db0" stroke-width="3" stroke-linecap="round"/><line x1="231.5" y1="70.5" x2="237.5" y2="64.5" stroke="#6b9bd2" stroke-width="1.6" stroke-linecap="round"/><rect x="219.5" y="74.5" width="8.5" height="8" fill="#8db88b" stroke="#5c8c58"/><text x="231" y="82.5" font-size="11.5" fill="#555" font-family="Liberation Sans">a</text><rect x="254" y="65" width="1" height="1" fill="#bdb9b2"/><rect x="257" y="65" width="1" height="1" fill="#bdb9b2"/><rect x="254" y="68" width="1" height="1" fill="#bdb9b2"/><rect x="257" y="68" width="1" height="1" fill="#bdb9b2"/><rect x="254" y="71" width="1" height="1" fill="#bdb9b2"/><rect x="257" y="71" width="1" height="1" fill="#bdb9b2"/><rect x="254" y="74" width="1" height="1" fill="#bdb9b2"/><rect x="257" y="74" width="1" height="1" fill="#bdb9b2"/><rect x="254" y="77" width="1" height="1" fill="#bdb9b2"/><rect x="257" y="77" width="1" height="1" fill="#bdb9b2"/><rect x="254" y="80" width="1" height="1" fill="#bdb9b2"/><rect x="257" y="80" width="1" height="1" fill="#bdb9b2"/><rect x="262.5" y="58.5" width="31" height="30" rx="3" fill="#dcdad6" stroke="#bdbab4"/><path d="M275,84 L270,75.5 Q269,73.5 270.8,73 Q272,73 273,74.5 L274,76 V64.5 Q274,62.8 275.5,62.8 Q277,62.8 277,64.5 V71 V62.5 Q277,61 278.5,61 Q280,61 280,62.5 V71 V63.5 Q280,62 281.5,62 Q283,62 283,63.5 V71.5 V66 Q283,64.5 284.5,64.5 Q286,64.5 286,66 V76 Q286,80 284,84 Z" fill="#fff" stroke="#111" stroke-width="1.1" stroke-linejoin="round"/><rect x="301.5" y="63.5" width="13.5" height="13.5" fill="#fbe44d" stroke="#c9a21c"/><g fill="#6292c8" stroke="#4272ad" stroke-width="0.6"><path d="M311,61 L315.5,65.5 H313 V69 H309 V65.5 H306.5 Z"/><path d="M311,85 L315.5,80.5 H313 V77 H309 V80.5 H306.5 Z"/><path d="M299,73 L303.5,68.5 V71 H307 V75 H303.5 V77.5 Z"/><path d="M323,73 L318.5,68.5 V71 H315 V75 H318.5 V77.5 Z"/></g><line x1="340.0" y1="76.9" x2="333.5" y2="83.4" stroke="#333" stroke-width="4.2" stroke-linecap="butt"/><line x1="340.0" y1="76.9" x2="333.8" y2="83.1" stroke="#f1c232" stroke-width="2.6"/><circle cx="340.5" cy="76.4" r="1.6" fill="#111"/><circle cx="346.5" cy="70.4" r="8.3" fill="#f2f2f2" stroke="#7a7a7a" stroke-width="1.1"/><g stroke="#5a8ac6" stroke-width="2.4"><line x1="341" y1="70.4" x2="352" y2="70.4"/><line x1="346.5" y1="65" x2="346.5" y2="76"/></g><line x1="373.1" y1="76.8" x2="366.6" y2="83.3" stroke="#333" stroke-width="4.2" stroke-linecap="butt"/><line x1="373.1" y1="76.8" x2="366.9" y2="83.0" stroke="#f1c232" stroke-width="2.6"/><circle cx="373.6" cy="76.3" r="1.6" fill="#111"/><circle cx="379.6" cy="70.3" r="8.3" fill="#f2f2f2" stroke="#7a7a7a" stroke-width="1.1"/><line x1="374" y1="70.3" x2="385.2" y2="70.3" stroke="#5a8ac6" stroke-width="2.6" stroke-linecap="round"/><line x1="406.2" y1="76.8" x2="399.7" y2="83.3" stroke="#333" stroke-width="4.2" stroke-linecap="butt"/><line x1="406.2" y1="76.8" x2="400.0" y2="83.0" stroke="#ddd" stroke-width="2.6"/><circle cx="406.7" cy="76.3" r="1.6" fill="#777"/><circle cx="412.7" cy="70.3" r="8.3" fill="#f2f2f2" stroke="#7a7a7a" stroke-width="1.1"/><text x="412.7" y="74" font-size="9" font-weight="bold" fill="#8a8a8a" text-anchor="middle" font-family="Liberation Sans">1:1</text><line x1="438.9" y1="77.5" x2="432.4" y2="84.0" stroke="#333" stroke-width="4.2" stroke-linecap="butt"/><line x1="438.9" y1="77.5" x2="432.7" y2="83.7" stroke="#f1c232" stroke-width="2.6"/><circle cx="439.4" cy="77.0" r="1.6" fill="#111"/><circle cx="445.4" cy="71" r="8.3" fill="#eaeaea" stroke="#7a7a7a" stroke-width="1.1"/><g fill="#5f90c9" stroke="#3f6ea8" stroke-width="0.6"><path d="M434.5,61 H442 L439.5,63.5 L442,66 L439,69 L436.5,66.5 L434.5,68.5 Z"/><path d="M455.5,61 H448 L450.5,63.5 L448,66 L451,69 L453.5,66.5 L455.5,68.5 Z"/><path d="M455.5,81.5 H448 L450.5,79 L448,76.5 L451,73.5 L453.5,76 L455.5,74 Z"/></g><rect x="466.5" y="63.5" width="9" height="13.5" fill="#fbe44d" stroke="#c9a21c"/><line x1="472.9" y1="76.4" x2="466.4" y2="82.9" stroke="#333" stroke-width="4.2" stroke-linecap="butt"/><line x1="472.9" y1="76.4" x2="466.7" y2="82.6" stroke="#f1c232" stroke-width="2.6"/><circle cx="473.4" cy="75.9" r="1.6" fill="#111"/><circle cx="479.5" cy="69.8" r="8.5" fill="#ececec" stroke="#7a7a7a" stroke-width="1.1"/><path d="M479.5,61.3 A8.5,8.5 0 0 0 479.5,78.3 Z" fill="#ebe6c8"/><line x1="479.5" y1="62" x2="479.5" y2="77.5" stroke="#ccc" stroke-width="0.6"/><rect x="499.5" y="63.5" width="8" height="13.5" fill="#e8e8e8" stroke="#888"/><line x1="503.9" y1="76.1" x2="497.4" y2="82.6" stroke="#333" stroke-width="4.2" stroke-linecap="butt"/><line x1="503.9" y1="76.1" x2="497.7" y2="82.3" stroke="#f1c232" stroke-width="2.6"/><circle cx="504.4" cy="75.6" r="1.6" fill="#111"/><circle cx="510.5" cy="69.5" r="8.5" fill="#ececec" stroke="#7a7a7a" stroke-width="1.1"/><line x1="510.5" y1="61.5" x2="510.5" y2="77.5" stroke="#bbb" stroke-width="0.6"/><line x1="537.6" y1="76.4" x2="531.1" y2="82.9" stroke="#333" stroke-width="4.2" stroke-linecap="butt"/><line x1="537.6" y1="76.4" x2="531.4" y2="82.6" stroke="#f1c232" stroke-width="2.6"/><circle cx="538.1" cy="75.9" r="1.6" fill="#111"/><circle cx="544" cy="70" r="8.2" fill="#eeeeee" stroke="#7a7a7a" stroke-width="1.1"/><rect x="542.5" y="74" width="11" height="11" fill="#5b8fcb" stroke="#3f6ea8" stroke-width="0.7"/><path d="M550.5,76.5 L545.5,79.5 L550.5,82.5" fill="none" stroke="#fff" stroke-width="1.8"/><line x1="570.6" y1="76.4" x2="564.1" y2="82.9" stroke="#333" stroke-width="4.2" stroke-linecap="butt"/><line x1="570.6" y1="76.4" x2="564.4" y2="82.6" stroke="#e2e2e2" stroke-width="2.6"/><circle cx="571.1" cy="75.9" r="1.6" fill="#888"/><circle cx="577" cy="70" r="8.2" fill="#efefef" stroke="#aaa" stroke-width="1.1"/><rect x="575.5" y="74" width="11" height="11" fill="#b5b5b5"/><path d="M578.5,76.5 L583.5,79.5 L578.5,82.5" fill="none" stroke="#fff" stroke-width="1.8"/><path d="M601.5,63.5 H617.5 V82.5 H602 Q598.5,82.5 598.5,80 V65 Q598.5,62.5 601.5,63.5 Z" fill="#e6e6e6" stroke="#8d8d8d"/><path d="M598.5,65 Q600,62.5 602,64 V79 Q600,78 598.5,80" fill="#f4f4f4" stroke="#8d8d8d" stroke-width="0.8"/><rect x="609" y="74" width="10.5" height="10.5" rx="1.8" fill="#c9a300"/><g stroke="#fff" stroke-width="1.2"><line x1="614.25" y1="75.45" x2="614.25" y2="83.05"/><line x1="610.95" y1="77.35" x2="617.55" y2="81.15"/><line x1="610.95" y1="81.15" x2="617.55" y2="77.35"/></g><circle cx="614.25" cy="79.25" r="1.9" fill="#c9a300" stroke="#fff" stroke-width="1.1"/><path d="M634.5,63.5 H650.5 V82.5 H635 Q631.5,82.5 631.5,80 V65 Q631.5,62.5 634.5,63.5 Z" fill="#e6e6e6" stroke="#8d8d8d"/><path d="M631.5,65 Q633,62.5 635,64 V79 Q633,78 631.5,80" fill="#f4f4f4" stroke="#8d8d8d" stroke-width="0.8"/><path d="M642,62 h4.5 v8.5 l-2.25,2.5 l-2.25,-2.5 Z" fill="#6b9bd2" stroke="#3d6aa3" stroke-width="0.8"/><rect x="642" y="74" width="10.5" height="10.5" rx="1.8" fill="#c9a300"/><g stroke="#fff" stroke-width="1.2"><line x1="647.25" y1="75.45" x2="647.25" y2="83.05"/><line x1="643.95" y1="77.35" x2="650.55" y2="81.15"/><line x1="643.95" y1="81.15" x2="650.55" y2="77.35"/></g><circle cx="647.25" cy="79.25" r="1.9" fill="#c9a300" stroke="#fff" stroke-width="1.1"/><path d="M667.5,63.5 H683.5 V82.5 H668 Q664.5,82.5 664.5,80 V65 Q664.5,62.5 667.5,63.5 Z" fill="#e6e6e6" stroke="#8d8d8d"/><path d="M664.5,65 Q666,62.5 668,64 V79 Q666,78 664.5,80" fill="#f4f4f4" stroke="#8d8d8d" stroke-width="0.8"/><path d="M675,62 h4.5 v8.5 l-2.25,2.5 l-2.25,-2.5 Z" fill="#6b9bd2" stroke="#3d6aa3" stroke-width="0.8"/><g fill="none" stroke="#4a82c4" stroke-width="4"><path d="M699.5,76.2 A7.8,7.8 0 0 1 711.3,67.1"/><path d="M714.1,70.8 A7.8,7.8 0 0 1 702.3,79.9"/></g><path d="M715.4,70.0 L707.6,70.9 L713.6,62.4 Z" fill="#4a82c4"/><path d="M698.2,77.0 L706.0,76.1 L700.0,84.6 Z" fill="#4a82c4"/><rect x="732" y="65" width="1" height="1" fill="#bdb9b2"/><rect x="735" y="65" width="1" height="1" fill="#bdb9b2"/><rect x="732" y="68" width="1" height="1" fill="#bdb9b2"/><rect x="735" y="68" width="1" height="1" fill="#bdb9b2"/><rect x="732" y="71" width="1" height="1" fill="#bdb9b2"/><rect x="735" y="71" width="1" height="1" fill="#bdb9b2"/><rect x="732" y="74" width="1" height="1" fill="#bdb9b2"/><rect x="735" y="74" width="1" height="1" fill="#bdb9b2"/><rect x="732" y="77" width="1" height="1" fill="#bdb9b2"/><rect x="735" y="77" width="1" height="1" fill="#bdb9b2"/><rect x="732" y="80" width="1" height="1" fill="#bdb9b2"/><rect x="735" y="80" width="1" height="1" fill="#bdb9b2"/><circle cx="752.5" cy="69.8" r="8.3" fill="#5f90c9" stroke="#4a7ab5" stroke-width="0.8"/><text x="751.5" y="75" font-size="13" font-style="italic" font-weight="bold" fill="#fff" text-anchor="middle" font-family="Liberation Serif">i</text><path d="M756.0,70.5 L756.0,83.7 L759.4,80.5 L762.0,85.5 L764.2,84.4 L761.6,79.5 L766.0,79.3 Z" fill="#fff" stroke="#222" stroke-width="0.9" stroke-linejoin="round" transform="rotate(-22 756 70.5)"/><circle cx="787" cy="70" r="8" fill="#e9e9e9" stroke="#b0b0b0" stroke-width="1.6" stroke-dasharray="2.2 1.4"/><circle cx="787" cy="70" r="5" fill="#bdbdbd" stroke="#a5a5a5" stroke-width="0.6"/><path d="M785.5,67 L789.5,70 L785.5,73 Z" fill="#fff"/><path d="M790.5,70.5 L790.5,83.7 L793.9,80.5 L796.5,85.5 L798.7,84.4 L796.1,79.5 L800.5,79.3 Z" fill="#fff" stroke="#999" stroke-width="0.9" stroke-linejoin="round" transform="rotate(-22 790.5 70.5)"/><path d="M806.0,70.5 H815.0 L810.5,75.5 Z" fill="#c5c5c5"/><rect x="823.5" y="62.5" width="21" height="20.5" fill="#e4e6ea" stroke="#222" stroke-width="1" stroke-dasharray="1.6 1.2"/><rect x="824.5" y="63.5" width="13.5" height="13.5" fill="#fbe44d" stroke="#c9a21c"/><path d="M832.5,69.0 L832.5,82.2 L835.9,79.0 L838.5,84.0 L840.7,82.9 L838.1,78.0 L842.5,77.8 Z" fill="#fff" stroke="#222" stroke-width="0.9" stroke-linejoin="round" transform="rotate(-22 832.5 69)"/><path d="M851.0,70.5 H860.0 L855.5,75.5 Z" fill="#3a3a3a"/><path d="M868.5,63.5 H888.5 V83.5 Z" fill="#e8e8e8" stroke="#888"/><path d="M868.5,63.5 V83.5 H888.5 Z" fill="#fbe44d" stroke="#c9a21c"/><path d="M896.5,70.5 H905.5 L901,75.5 Z" fill="#3a3a3a"/><rect x="914.5" y="63.5" width="13.5" height="13.5" fill="#fbe44d" stroke="#c9a21c"/><rect x="925" y="74" width="11" height="11" rx="2" fill="#d9262a"/><circle cx="930.5" cy="79.5" r="3.6" fill="none" stroke="#fff" stroke-width="1.1"/><line x1="928" y1="82" x2="933" y2="77" stroke="#fff" stroke-width="1.1"/><rect x="947.5" y="63.5" width="19.5" height="19.5" fill="#eef3fa" stroke="#6b9bd0"/><rect x="948" y="64" width="18.5" height="4" fill="#c9dcf2"/><g stroke="#6b9bd0" stroke-width="1.1"><line x1="950" y1="66" x2="954" y2="66"/><line x1="956" y1="66" x2="964" y2="66"/><line x1="950" y1="71" x2="953" y2="71"/><line x1="956" y1="71" x2="964" y2="71"/><line x1="950" y1="74" x2="953" y2="74"/><line x1="956" y1="74" x2="964" y2="74"/><line x1="950" y1="77" x2="953" y2="77"/><line x1="956" y1="77" x2="964" y2="77"/><line x1="950" y1="80" x2="953" y2="80"/><line x1="956" y1="80" x2="964" y2="80"/></g><g stroke="#555" stroke-width="1.2"><line x1="980.5" y1="63" x2="980.5" y2="82"/><line x1="999.5" y1="63" x2="999.5" y2="82"/></g><rect x="979" y="82" width="22" height="2" fill="#555"/><g stroke="#777" stroke-width="0.7"><line x1="980" y1="66" x2="1000" y2="66"/><line x1="980" y1="71" x2="1000" y2="71"/><line x1="980" y1="77" x2="1000" y2="77"/></g><path d="M987,63.7 L989.3,66 L987,68.3 L984.7,66 Z" fill="#f06a6a" stroke="#c33" stroke-width="0.6"/><path d="M995,63.7 L997.3,66 L995,68.3 L992.7,66 Z" fill="#f06a6a" stroke="#c33" stroke-width="0.6"/><path d="M985,68.7 L987.3,71 L985,73.3 L982.7,71 Z" fill="#9ed89e" stroke="#4a4" stroke-width="0.6"/><path d="M990,68.7 L992.3,71 L990,73.3 L987.7,71 Z" fill="#9ed89e" stroke="#4a4" stroke-width="0.6"/><path d="M985,74.7 L987.3,77 L985,79.3 L982.7,77 Z" fill="#9ec4ee" stroke="#47a" stroke-width="0.6"/><path d="M990,74.7 L992.3,77 L990,79.3 L987.7,77 Z" fill="#9ec4ee" stroke="#47a" stroke-width="0.6"/><path d="M995,74.7 L997.3,77 L995,79.3 L992.7,77 Z" fill="#9ec4ee" stroke="#47a" stroke-width="0.6"/><path d="M1016,63 H1030 L1030.5,67 H1029 Q1028,65.5 1026,65.5 H1020.5 L1025.5,73 L1020,80.5 H1026.5 Q1029,80.5 1030,78.5 H1031 L1030,83 H1015.5 V82 L1022,73.2 L1015.8,64 Z" fill="#a0139f"/><line x1="1046" y1="67.5" x2="1066" y2="67.5" stroke="#2f4f78" stroke-width="1.6"/><line x1="1046" y1="65" x2="1046" y2="70" stroke="#2f4f78" stroke-width="1.2"/><line x1="1066" y1="65" x2="1066" y2="70" stroke="#2f4f78" stroke-width="1.2"/><rect x="1045.5" y="74.5" width="21" height="8.5" rx="1" fill="#cfcfcf" stroke="#555"/><g stroke="#555" stroke-width="0.9"><line x1="1048.5" y1="75" x2="1048.5" y2="78"/><line x1="1051.5" y1="75" x2="1051.5" y2="77"/><line x1="1054.5" y1="75" x2="1054.5" y2="78"/><line x1="1057.5" y1="75" x2="1057.5" y2="77"/><line x1="1060.5" y1="75" x2="1060.5" y2="78"/><line x1="1063.5" y1="75" x2="1063.5" y2="77"/></g><path d="M1073.5,70.5 H1082.5 L1078,75.5 Z" fill="#3a3a3a"/><path d="M1093,62.5 H1110 Q1112,62.5 1112,65 V71 Q1112,73.5 1110,73.5 H1101 L1097,79 V73.5 H1093 Q1090.5,73.5 1090.5,71 V65 Q1090.5,62.5 1093,62.5 Z" fill="#faeb96" stroke="#d3b21d"/><circle cx="1095" cy="80.5" r="3.3" fill="#77b57a" stroke="#4a7a4c" stroke-width="0.8"/><path d="M1123.5,62.5 H1145 V78 H1129.5 L1124,83 L1126,78 H1123.5 Z" fill="#e8f0f6" stroke="#999"/><text x="1134.2" y="76" font-size="15.5" font-weight="bold" fill="#3a3a3a" text-anchor="middle" font-family="Liberation Serif">T</text><path d="M1151.5,70.5 H1160.5 L1156,75.5 Z" fill="#3a3a3a"/>
<rect x="7" y="103" width="1" height="1" fill="#bdb9b2"/><rect x="10" y="103" width="1" height="1" fill="#bdb9b2"/><rect x="7" y="106" width="1" height="1" fill="#bdb9b2"/><rect x="10" y="106" width="1" height="1" fill="#bdb9b2"/><rect x="7" y="109" width="1" height="1" fill="#bdb9b2"/><rect x="10" y="109" width="1" height="1" fill="#bdb9b2"/><rect x="7" y="112" width="1" height="1" fill="#bdb9b2"/><rect x="10" y="112" width="1" height="1" fill="#bdb9b2"/><rect x="7" y="115" width="1" height="1" fill="#bdb9b2"/><rect x="10" y="115" width="1" height="1" fill="#bdb9b2"/><rect x="7" y="118" width="1" height="1" fill="#bdb9b2"/><rect x="10" y="118" width="1" height="1" fill="#bdb9b2"/><path d="M19.5,111.5 L30,106 L35.5,118 L25,123.5 Z" fill="#e0642f" stroke="#b24c20" stroke-width="0.8"/><path d="M23,105 L34,104 L35,118 L24,119 Z" fill="#f2c837" stroke="#c9a21c" stroke-width="0.8"/><path d="M29,100 L40.5,102 L38.5,115 L27,113 Z" fill="#6b9bd2" stroke="#2e4e7a" stroke-width="0.9"/><rect x="34.5" y="113" width="9.5" height="9.5" rx="1.8" fill="#5a9a5a"/><g stroke="#fff" stroke-width="2"><line x1="39.25" y1="114.25" x2="39.25" y2="121.25"/><line x1="35.75" y1="117.75" x2="42.75" y2="117.75"/></g><circle cx="64" cy="106" r="7" fill="#7aa6da" stroke="#4d7bb7" stroke-width="0.8"/><path d="M59,104 Q62,101 64,104 T69,106 M60,109 Q63,107 66,110" stroke="#2e5a94" stroke-width="1.6" fill="none"/><path d="M52.5,107.5 L64,113 V123 L52.5,117.5 Z" fill="#d9ae00" stroke="#333" stroke-width="0.9"/><path d="M64,113 L75.5,108 V118 L64,123 Z" fill="#fbeb6c" stroke="#333" stroke-width="0.9"/><path d="M52.5,107.5 L56,106 L64,113 L75.5,108 L72,106" fill="none" stroke="#333" stroke-width="0.9"/><rect x="67" y="113" width="9.5" height="9.5" rx="1.8" fill="#c9a300"/><g stroke="#fff" stroke-width="1.3"><line x1="71.75" y1="114.15" x2="71.75" y2="121.35"/><line x1="68.15" y1="117.75" x2="75.35" y2="117.75"/><line x1="69.15" y1="115.15" x2="74.35" y2="120.35"/><line x1="69.15" y1="120.35" x2="74.35" y2="115.15"/></g><path d="M86.5,102.5 L94,117.5 L100.5,102.5 L105.5,102.5" fill="none" stroke="#2c3e55" stroke-width="1.3"/><circle cx="94" cy="117.5" r="1.6" fill="#fff" stroke="#2c3e55" stroke-width="0.9"/><path d="M86.5,100.9 L88.1,102.5 L86.5,104.1 L84.9,102.5 Z" fill="#fff" stroke="#2c3e55" stroke-width="0.8"/><path d="M100.5,100.9 L102.1,102.5 L100.5,104.1 L98.9,102.5 Z" fill="#fff" stroke="#2c3e55" stroke-width="0.8"/><path d="M106,100.9 L107.6,102.5 L106,104.1 L104.4,102.5 Z" fill="#fff" stroke="#2c3e55" stroke-width="0.8"/><rect x="100" y="113" width="9.5" height="9.5" rx="1.8" fill="#c9a300"/><g stroke="#fff" stroke-width="1.3"><line x1="104.75" y1="114.15" x2="104.75" y2="121.35"/><line x1="101.15" y1="117.75" x2="108.35" y2="117.75"/><line x1="102.15" y1="115.15" x2="107.35" y2="120.35"/><line x1="102.15" y1="120.35" x2="107.35" y2="115.15"/></g><path d="M118.5,122.5 Q121,108 132,103 Q137,100.5 141,100 Q140,106 136,112 Q129,119 120,121 Z" fill="#86acd8" stroke="#4c74a8" stroke-width="0.9"/><path d="M119,122 Q126,112 139,101.5" stroke="#3a5f91" stroke-width="0.7" fill="none"/><rect x="133" y="113" width="9.5" height="9.5" rx="1.8" fill="#c9a300"/><g stroke="#fff" stroke-width="1.3"><line x1="137.75" y1="114.15" x2="137.75" y2="121.35"/><line x1="134.15" y1="117.75" x2="141.35" y2="117.75"/><line x1="135.15" y1="115.15" x2="140.35" y2="120.35"/><line x1="135.15" y1="120.35" x2="140.35" y2="115.15"/></g><rect x="154.5" y="106.5" width="18.5" height="10" rx="1.5" fill="#6b9bd2" stroke="#2c4c78"/><g stroke="#2c4c78" stroke-width="0.9"><line x1="157" y1="102" x2="157" y2="106.5"/><line x1="157" y1="116.5" x2="157" y2="120"/><line x1="160" y1="102" x2="160" y2="106.5"/><line x1="160" y1="116.5" x2="160" y2="120"/><line x1="163" y1="102" x2="163" y2="106.5"/><line x1="163" y1="116.5" x2="163" y2="120"/><line x1="166" y1="102" x2="166" y2="106.5"/><line x1="166" y1="116.5" x2="166" y2="120"/><line x1="169" y1="102" x2="169" y2="106.5"/><line x1="169" y1="116.5" x2="169" y2="120"/></g><rect x="166" y="115" width="9.5" height="9.5" rx="1.8" fill="#c9a300"/><g stroke="#fff" stroke-width="1.3"><line x1="170.75" y1="116.15" x2="170.75" y2="123.35"/><line x1="167.15" y1="119.75" x2="174.35" y2="119.75"/><line x1="168.15" y1="117.15" x2="173.35" y2="122.35"/><line x1="168.15" y1="122.35" x2="173.35" y2="117.15"/></g><rect x="187" y="103" width="1" height="1" fill="#bdb9b2"/><rect x="190" y="103" width="1" height="1" fill="#bdb9b2"/><rect x="187" y="106" width="1" height="1" fill="#bdb9b2"/><rect x="190" y="106" width="1" height="1" fill="#bdb9b2"/><rect x="187" y="109" width="1" height="1" fill="#bdb9b2"/><rect x="190" y="109" width="1" height="1" fill="#bdb9b2"/><rect x="187" y="112" width="1" height="1" fill="#bdb9b2"/><rect x="190" y="112" width="1" height="1" fill="#bdb9b2"/><rect x="187" y="115" width="1" height="1" fill="#bdb9b2"/><rect x="190" y="115" width="1" height="1" fill="#bdb9b2"/><rect x="187" y="118" width="1" height="1" fill="#bdb9b2"/><rect x="190" y="118" width="1" height="1" fill="#bdb9b2"/><g fill="#cfcfcf" stroke="#b4b4b4" stroke-width="0.8"><path d="M203,121 L206,113 L214,100 L217,102 L209,115 Z"/><path d="M208,123 L211,115 L219,102 L222,104 L214,117 Z"/></g><path d="M219.5,119.5 H228.5 L224,124.5 Z" fill="#cccccc"/><path d="M238,122.5 L239,116.5 L248.5,100.5 L252.5,103 L243,119 Z" fill="#f2d43d" stroke="#555" stroke-width="0.9"/><path d="M238,122.5 L239,116.5 L243,119 Z" fill="#999"/><path d="M248.5,100.5 L252.5,103 L253.5,101.5 L249.5,99 Z" fill="#ddd" stroke="#777" stroke-width="0.6"/><rect x="267.5" y="101.5" width="19" height="20.5" rx="2" fill="#c2c2c2" stroke="#aaaaaa"/><rect x="270" y="102.5" width="14" height="8.5" fill="#efefef"/><line x1="271.5" y1="104.5" x2="282.5" y2="104.5" stroke="#bbb" stroke-width="0.9"/><line x1="271.5" y1="106.5" x2="282.5" y2="106.5" stroke="#bbb" stroke-width="0.9"/><line x1="271.5" y1="108.5" x2="282.5" y2="108.5" stroke="#bbb" stroke-width="0.9"/><rect x="270.5" y="114" width="13" height="7.5" fill="#efefef"/><rect x="272.5" y="115.5" width="2.2" height="4.5" fill="#aaa"/><path d="M280,123 L281,118 L288,107 L291,109 L284,120 Z" fill="#bdbdbd" stroke="#a5a5a5" stroke-width="0.7"/><path d="M302,104.5 Q307,99 313,103 Q318,100.5 321.5,104 Q323,109 318.5,112 Q312,112 310,113 Q303,115 301,110 Q300,106.5 302,104.5 Z" fill="#cfcdca" stroke="#9e9e9e" stroke-width="0.9"/><rect x="312" y="113" width="11" height="10.5" rx="1.6" fill="#c4c4c4"/><circle cx="317.5" cy="118.2" r="2" fill="none" stroke="#fff" stroke-width="1"/><g stroke="#aaa" stroke-width="0.9" fill="none"><circle cx="338" cy="105" r="3"/><line x1="336" y1="107" x2="333" y2="120"/><line x1="340" y1="107" x2="337" y2="121"/><line x1="340" y1="103" x2="351" y2="103"/><line x1="342" y1="106" x2="353" y2="106"/></g><g stroke="#c3c3c3" stroke-width="2.2"><line x1="342" y1="121" x2="354" y2="110"/><line x1="343" y1="111" x2="354" y2="122"/></g><path d="M361.5,109.5 H370.5 L366,114.5 Z" fill="#cccccc"/><g fill="#e3e3e3" stroke="#c2c2c2" stroke-width="0.9"><rect x="378.5" y="101.5" width="16" height="5"/><rect x="378.5" y="108" width="16" height="5"/><rect x="378.5" y="114.5" width="16" height="5"/></g><path d="M384,121 L385,115 L396,100 L399,102 L388,118 Z" fill="#cbcbcb" stroke="#999" stroke-width="0.8"/><path d="M415.5,104.5 H429.5" stroke="#777" stroke-width="1.6"/><path d="M420,104 Q420,102.2 422.5,102.2 Q425,102.2 425,104" fill="none" stroke="#777" stroke-width="1"/><path d="M416.5,107 H428.5 L427.5,122.5 H417.5 Z" fill="#e8e8e8" stroke="#777" stroke-width="1.4"/><g stroke="#999" stroke-width="1.2"><line x1="420.5" y1="108.5" x2="420.5" y2="121"/><line x1="422.5" y1="108.5" x2="422.5" y2="121"/><line x1="424.5" y1="108.5" x2="424.5" y2="121"/></g><g fill="none" stroke="#808080" stroke-width="1.2"><ellipse cx="463" cy="107.5" rx="2.7" ry="2" transform="rotate(-30 463 107.5)"/><ellipse cx="463" cy="116.5" rx="2.7" ry="2" transform="rotate(30 463 116.5)"/></g><path d="M445,104.5 L460.5,113 L459,114 Z" fill="#c8c8c8" stroke="#999" stroke-width="0.6"/><path d="M444.5,111 H457 L460.5,112.5 L457,113.5 Z" fill="#d5d5d5" stroke="#aaa" stroke-width="0.6"/><path d="M486.5,102.5 H493 L496.5,106 V116.5 H486.5 Z" fill="#fafafa" stroke="#aaa" stroke-width="0.8"/><path d="M480.5,106.5 H487.5 L490.5,109.5 V121.5 H480.5 Z" fill="#fff" stroke="#777" stroke-width="1"/><g stroke="#999" stroke-width="0.9"><line x1="482" y1="112.5" x2="488.5" y2="112.5"/><line x1="482" y1="114.5" x2="486.5" y2="114.5"/><line x1="482" y1="116.5" x2="488.5" y2="116.5"/><line x1="482" y1="118.5" x2="486.5" y2="118.5"/><line x1="482" y1="120.5" x2="488.5" y2="120.5"/></g><rect x="513.5" y="102.5" width="16" height="19.5" rx="1" fill="#e5e5e5" stroke="#9a9a9a"/><rect x="517" y="101" width="9" height="3.5" fill="#cfcfcf" stroke="#999" stroke-width="0.7"/><path d="M516,106 H525 L528,109 V120 H516 Z" fill="#fff" stroke="#888" stroke-width="0.8"/><g stroke="#aaa" stroke-width="0.9"><line x1="518" y1="110.5" x2="525.5" y2="110.5"/><line x1="518" y1="112.5" x2="525.5" y2="112.5"/><line x1="518" y1="114.5" x2="525.5" y2="114.5"/><line x1="518" y1="116.5" x2="525.5" y2="116.5"/><line x1="518" y1="118.5" x2="525.5" y2="118.5"/></g><path d="M545.5,111 L551.5,103 V107.5 H555 Q562.5,107.5 562.5,114.5 Q562.5,121 556,121 H554.5 V117 H556 Q559,117 559,114.3 Q559,111.5 555.5,111.5 H551.5 V119 Z" fill="#c8c8c8" stroke="#bbb" stroke-width="0.5"/><path d="M596,111 L590,103 V107.5 H586.5 Q579,107.5 579,114.5 Q579,121 585.5,121 H587 V117 H585.5 Q582.5,117 582.5,114.3 Q582.5,111.5 586,111.5 H590 V119 Z" fill="#c8c8c8" stroke="#bbb" stroke-width="0.5"/><rect x="612" y="103" width="1" height="1" fill="#bdb9b2"/><rect x="615" y="103" width="1" height="1" fill="#bdb9b2"/><rect x="612" y="106" width="1" height="1" fill="#bdb9b2"/><rect x="615" y="106" width="1" height="1" fill="#bdb9b2"/><rect x="612" y="109" width="1" height="1" fill="#bdb9b2"/><rect x="615" y="109" width="1" height="1" fill="#bdb9b2"/><rect x="612" y="112" width="1" height="1" fill="#bdb9b2"/><rect x="615" y="112" width="1" height="1" fill="#bdb9b2"/><rect x="612" y="115" width="1" height="1" fill="#bdb9b2"/><rect x="615" y="115" width="1" height="1" fill="#bdb9b2"/><rect x="612" y="118" width="1" height="1" fill="#bdb9b2"/><rect x="615" y="118" width="1" height="1" fill="#bdb9b2"/><path d="M625,109.5 L630,104.5 H645.5 V114.5 H630 Z" fill="#f6e04b" stroke="#c9a21c" stroke-width="0.9"/><text x="637.8" y="113" font-size="9" font-weight="bold" text-anchor="middle" fill="#333" font-family="Liberation Sans">abc</text><circle cx="666" cy="109" r="7" fill="#c81e1e" stroke="#6a1010" stroke-width="0.5"/><path d="M666,109 L659.2,107.3 A7,7 0 0 1 672.5,106.3 Z" fill="#f6d21d"/><path d="M666,109 L666.5,116 A7,7 0 0 1 659.2,107.3 Z" fill="#1a9a3a"/><rect x="667" y="116.5" width="3.4" height="6" fill="#f6d21d" stroke="#b59500" stroke-width="0.4"/><rect x="671.5" y="110.5" width="3.3" height="12" fill="#1a9a3a" stroke="#0b5a1b" stroke-width="0.5"/><rect x="675.3" y="117.6" width="3.6" height="4.9" fill="#b41b1b" stroke="#6a1010" stroke-width="0.4"/><rect x="690.5" y="102.5" width="23" height="19.5" fill="#dde6f2" stroke="#2f6fd8" stroke-width="1.2"/><path d="M691,109.5 L696,104.5 H710 V114.5 H696 Z" fill="#f6e04b" stroke="#c9a21c" stroke-width="0.9"/><text x="700.5" y="113" font-size="9" font-weight="bold" text-anchor="middle" fill="#333" font-family="Liberation Sans">ab</text><path d="M706,113 V106 Q706,104.5 707,104.5 Q708,104.5 708,106 V113" fill="#fff" stroke="#555" stroke-width="0.6"/><circle cx="709" cy="117" r="4.3" fill="#b0232a" stroke="#7a1518" stroke-width="0.6"/><path d="M724,109.5 L729,104.5 H743 V114.5 H729 Z" fill="#ececec" stroke="#b5b5b5" stroke-width="0.9"/><text x="733.5" y="113" font-size="9" font-weight="bold" text-anchor="middle" fill="#888" font-family="Liberation Sans">ab</text><path d="M739,113 V106 Q739,104.5 740,104.5 Q741,104.5 741,106 V113" fill="#fff" stroke="#999" stroke-width="0.6"/><circle cx="741.5" cy="117" r="4.3" fill="#8c8c8c"/><path d="M757,109.5 L762,104.5 H777 V114.5 H762 Z" fill="#ececec" stroke="#b5b5b5" stroke-width="0.9"/><text x="769.5" y="113" font-size="9" font-weight="bold" text-anchor="middle" fill="#888" font-family="Liberation Sans">abc</text><path d="M765,118 Q770.5,113 777,118 Q770.5,123 765,118 Z" fill="#fff" stroke="#888" stroke-width="0.8"/><circle cx="771" cy="118" r="1.4" fill="#555"/><path d="M790,109.5 L795,104.5 H810 V114.5 H795 Z" fill="#ececec" stroke="#b5b5b5" stroke-width="0.9"/><text x="802.5" y="113" font-size="9" font-weight="bold" text-anchor="middle" fill="#888" font-family="Liberation Sans">abc</text><rect x="802.5" y="113" width="10.5" height="10" rx="1.5" fill="#8d8d8d"/><path d="M804.5,116.5 H808 V114.5 L811.5,118 L808,121.5 V119.5 H804.5 Z" fill="#fff"/><path d="M823,109.5 L828,104.5 H843 V114.5 H828 Z" fill="#ececec" stroke="#b5b5b5" stroke-width="0.9"/><text x="835.5" y="113" font-size="9" font-weight="bold" text-anchor="middle" fill="#888" font-family="Liberation Sans">abc</text><rect x="835.5" y="113" width="10.5" height="10" rx="1.5" fill="#8d8d8d"/><circle cx="840.7" cy="118" r="2.6" fill="none" stroke="#fff" stroke-width="1.3"/><path d="M856,109.5 L861,104.5 H876 V114.5 H861 Z" fill="#ececec" stroke="#b5b5b5" stroke-width="0.9"/><text x="868.5" y="113" font-size="9" font-weight="bold" text-anchor="middle" fill="#888" font-family="Liberation Sans">abc</text><rect x="868.5" y="113" width="10.5" height="10" rx="1.5" fill="#c6c6c6"/><line x1="871" y1="121" x2="877" y2="115" stroke="#fff" stroke-width="1.4"/><rect x="892" y="103" width="1" height="1" fill="#bdb9b2"/><rect x="895" y="103" width="1" height="1" fill="#bdb9b2"/><rect x="892" y="106" width="1" height="1" fill="#bdb9b2"/><rect x="895" y="106" width="1" height="1" fill="#bdb9b2"/><rect x="892" y="109" width="1" height="1" fill="#bdb9b2"/><rect x="895" y="109" width="1" height="1" fill="#bdb9b2"/><rect x="892" y="112" width="1" height="1" fill="#bdb9b2"/><rect x="895" y="112" width="1" height="1" fill="#bdb9b2"/><rect x="892" y="115" width="1" height="1" fill="#bdb9b2"/><rect x="895" y="115" width="1" height="1" fill="#bdb9b2"/><rect x="892" y="118" width="1" height="1" fill="#bdb9b2"/><rect x="895" y="118" width="1" height="1" fill="#bdb9b2"/><circle cx="916" cy="110" r="11.5" fill="#7ea8d8" stroke="#3f6aa3" stroke-width="0.8"/><g stroke="#dce8f6" stroke-width="0.8" fill="none"><ellipse cx="916" cy="110" rx="5" ry="11.5"/><line x1="904.5" y1="110" x2="927.5" y2="110"/><line x1="906" y1="104" x2="926" y2="104"/><line x1="906" y1="116" x2="926" y2="116"/></g><g fill="#2f5a92"><rect x="908" y="105" width="4" height="4"/><rect x="918" y="104.5" width="5" height="4"/><rect x="912" y="111" width="4" height="4"/></g><path d="M910,114 L912,112 H914.5 L915.5,116 H916.5 L917.5,112 H920 L922,114 L924,119 A4,4 0 1 1 916.8,119 H915.2 A4,4 0 1 1 908,119 Z" fill="#111"/><ellipse cx="911.5" cy="120.5" rx="2.5" ry="1.6" fill="#fff"/><ellipse cx="920.5" cy="120.5" rx="2.5" ry="1.6" fill="#fff"/><rect x="941" y="103" width="1" height="1" fill="#bdb9b2"/><rect x="944" y="103" width="1" height="1" fill="#bdb9b2"/><rect x="941" y="106" width="1" height="1" fill="#bdb9b2"/><rect x="944" y="106" width="1" height="1" fill="#bdb9b2"/><rect x="941" y="109" width="1" height="1" fill="#bdb9b2"/><rect x="944" y="109" width="1" height="1" fill="#bdb9b2"/><rect x="941" y="112" width="1" height="1" fill="#bdb9b2"/><rect x="944" y="112" width="1" height="1" fill="#bdb9b2"/><rect x="941" y="115" width="1" height="1" fill="#bdb9b2"/><rect x="944" y="115" width="1" height="1" fill="#bdb9b2"/><rect x="941" y="118" width="1" height="1" fill="#bdb9b2"/><rect x="944" y="118" width="1" height="1" fill="#bdb9b2"/><path d="M965,101.5 Q959.5,101.5 959.5,105 V107.5 H965.5 V108.5 H957.5 Q955,108.5 955,112.5 Q955,117 957.5,117 H959.5 V114 Q959.5,111.5 962,111.5 H968 Q970.5,111.5 970.5,109 V104.5 Q970.5,101.5 965,101.5 Z" fill="#3f7ab6"/><path d="M966,122.5 Q971.5,122.5 971.5,119 V116.5 H965.5 V115.5 H973.5 Q976,115.5 976,111.5 Q976,107 973.5,107 H971.5 V110 Q971.5,112.5 969,112.5 H963 Q960.5,112.5 960.5,115 V119.5 Q960.5,122.5 966,122.5 Z" fill="#f6d04a"/><circle cx="962.5" cy="104" r="0.9" fill="#fff"/><path d="M970.5,117 L975.5,119.5 L970.5,122" fill="none" stroke="#444" stroke-width="0.9"/><rect x="990" y="103" width="1" height="1" fill="#bdb9b2"/><rect x="993" y="103" width="1" height="1" fill="#bdb9b2"/><rect x="990" y="106" width="1" height="1" fill="#bdb9b2"/><rect x="993" y="106" width="1" height="1" fill="#bdb9b2"/><rect x="990" y="109" width="1" height="1" fill="#bdb9b2"/><rect x="993" y="109" width="1" height="1" fill="#bdb9b2"/><rect x="990" y="112" width="1" height="1" fill="#bdb9b2"/><rect x="993" y="112" width="1" height="1" fill="#bdb9b2"/><rect x="990" y="115" width="1" height="1" fill="#bdb9b2"/><rect x="993" y="115" width="1" height="1" fill="#bdb9b2"/><rect x="990" y="118" width="1" height="1" fill="#bdb9b2"/><rect x="993" y="118" width="1" height="1" fill="#bdb9b2"/><rect x="1004.5" y="101.5" width="19" height="21" fill="#6a9acb" stroke="#263646" stroke-width="1"/><rect x="1004.5" y="101.5" width="4.5" height="21" fill="#2e4255" stroke="#263646" stroke-width="1"/><text x="1016.5" y="117.5" font-size="15" fill="#fff" text-anchor="middle" font-family="Liberation Serif">?</text><rect x="1039" y="103" width="1" height="1" fill="#bdb9b2"/><rect x="1042" y="103" width="1" height="1" fill="#bdb9b2"/><rect x="1039" y="106" width="1" height="1" fill="#bdb9b2"/><rect x="1042" y="106" width="1" height="1" fill="#bdb9b2"/><rect x="1039" y="109" width="1" height="1" fill="#bdb9b2"/><rect x="1042" y="109" width="1" height="1" fill="#bdb9b2"/><rect x="1039" y="112" width="1" height="1" fill="#bdb9b2"/><rect x="1042" y="112" width="1" height="1" fill="#bdb9b2"/><rect x="1039" y="115" width="1" height="1" fill="#bdb9b2"/><rect x="1042" y="115" width="1" height="1" fill="#bdb9b2"/><rect x="1039" y="118" width="1" height="1" fill="#bdb9b2"/><rect x="1042" y="118" width="1" height="1" fill="#bdb9b2"/><rect x="1056" y="103" width="1" height="1" fill="#bdb9b2"/><rect x="1059" y="103" width="1" height="1" fill="#bdb9b2"/><rect x="1056" y="106" width="1" height="1" fill="#bdb9b2"/><rect x="1059" y="106" width="1" height="1" fill="#bdb9b2"/><rect x="1056" y="109" width="1" height="1" fill="#bdb9b2"/><rect x="1059" y="109" width="1" height="1" fill="#bdb9b2"/><rect x="1056" y="112" width="1" height="1" fill="#bdb9b2"/><rect x="1059" y="112" width="1" height="1" fill="#bdb9b2"/><rect x="1056" y="115" width="1" height="1" fill="#bdb9b2"/><rect x="1059" y="115" width="1" height="1" fill="#bdb9b2"/><rect x="1056" y="118" width="1" height="1" fill="#bdb9b2"/><rect x="1059" y="118" width="1" height="1" fill="#bdb9b2"/><path d="M1069,101 Q1075,102.5 1080,101 Q1086,102.5 1090,101 Q1089,108 1090.5,113 Q1089,118 1090.5,121.5 Q1084,120 1079,121.5 Q1073,120.5 1068,121.5 Q1069.5,115 1068.5,110 Q1070,105 1069,101 Z" fill="#b9dfa4"/><path d="M1077,112 Q1080,106 1085,109 Q1084,114 1080,115" fill="#aac8e6"/><path d="M1071,107 Q1078,110 1083,104" stroke="#d9c9a8" stroke-width="0.6" fill="none"/><path d="M1079,120 L1089,112" stroke="#1c7a1c" stroke-width="1.6"/><ellipse cx="1083.5" cy="117" rx="3" ry="3.5" fill="none" stroke="#c8b400" stroke-width="1.2"/><rect x="1103" y="102" width="20" height="20" fill="#f3e8b8"/><path d="M1103,102 H1108 V108 H1103 Z" fill="#3bb54a"/><path d="M1110,104 L1116,102 L1120,112 L1114,122 H1108 L1112,114 Z" fill="#4d8ae0" opacity="0.85"/><rect x="1104" y="110" width="5" height="6" fill="#e8b0c0"/><line x1="1111" y1="119" x2="1122" y2="102" stroke="#7a3b16" stroke-width="3"/><circle cx="1121.5" cy="102.5" r="1.3" fill="#111"/>
<rect x="26.5" y="186.5" width="12.5" height="12.5" fill="#fff" stroke="#a5a29c"/><path d="M29,193 L31.5,196.5 L36.5,189" fill="none" stroke="#111" stroke-width="1.6"/><circle cx="54" cy="192.5" r="2.3" fill="#e00"/><rect x="26.5" y="205.5" width="12.5" height="12.5" fill="#fff" stroke="#a5a29c"/><path d="M29,212 L31.5,215.5 L36.5,208" fill="none" stroke="#111" stroke-width="1.6"/><line x1="46" y1="211.5" x2="62" y2="211.5" stroke="#d2584f" stroke-width="1"/><rect x="26.5" y="224.5" width="12.5" height="12.5" fill="#fff" stroke="#a5a29c"/><path d="M29,231 L31.5,234.5 L36.5,227" fill="none" stroke="#111" stroke-width="1.6"/><line x1="46" y1="230.5" x2="62" y2="230.5" stroke="#3a62d8" stroke-width="1.2"/><rect x="26.5" y="243.5" width="12.5" height="12.5" fill="#fff" stroke="#a5a29c"/><path d="M29,250 L31.5,253.5 L36.5,246" fill="none" stroke="#111" stroke-width="1.6"/><rect x="46.5" y="242.5" width="15" height="15" fill="#c2b796" stroke="#4a4536" stroke-width="1"/><rect x="26.5" y="262.5" width="12.5" height="12.5" fill="#fff" stroke="#a5a29c"/><path d="M29,269 L31.5,272.5 L36.5,265" fill="none" stroke="#111" stroke-width="1.6"/><rect x="46.5" y="261.5" width="15" height="15" fill="#a6daf7" stroke="#4a7ee0" stroke-width="1"/><rect x="26.5" y="281.5" width="12.5" height="12.5" fill="#fff" stroke="#a5a29c"/><path d="M29,288 L31.5,291.5 L36.5,284" fill="none" stroke="#111" stroke-width="1.6"/><rect x="46.5" y="280.5" width="15" height="15" fill="#b8b76a" stroke="#595a30" stroke-width="1"/><rect x="26.5" y="300.5" width="12.5" height="12.5" fill="#fff" stroke="#a5a29c"/><path d="M29,307 L31.5,310.5 L36.5,303" fill="none" stroke="#111" stroke-width="1.6"/><rect x="46.5" y="299.5" width="15" height="15" fill="#bdbdbd" stroke="#bdbdbd" stroke-width="1"/>
<path d="M11,169 L19,163 L21,166 L14,171 Z" fill="#e04040"/><path d="M13,166 L19,161 L21,164 L15,169 Z" fill="#f2c837"/><line x1="19" y1="164" x2="25.5" y2="158.5" stroke="#8a5a2a" stroke-width="2.2"/><path d="M10.5,168 L17,164 L19,170 L14,172 Z" fill="#f06a6a" opacity="0.6"/><rect x="36.5" y="160.5" width="8" height="11" fill="#f4f4f4" stroke="#777" stroke-width="0.9"/><rect x="39.5" y="157.5" width="8" height="11" fill="#f8f8f8" stroke="#777" stroke-width="0.9"/><rect x="45" y="167" width="6" height="6" rx="1" fill="#5a9a5a"/><path d="M48,168.5 V171.5 M46.5,170 H49.5" stroke="#fff" stroke-width="1"/><path d="M60,164.5 Q68,157 77,164.5 Q68,172 60,164.5 Z" fill="#e8eef5" stroke="#9aa" stroke-width="0.8"/><circle cx="68" cy="164.5" r="3.2" fill="#3d74b8"/><circle cx="68" cy="164.5" r="1.2" fill="#123"/><path d="M73,170 H78 L75.5,172.5 Z" fill="#333"/><path d="M86,159 H100 L95,166 V173 L91,171 V166 Z" fill="#6b9bd2" stroke="#4a79b2" stroke-width="0.8"/><rect x="86" y="158.5" width="14" height="2" fill="#f2d33d"/><text x="111" y="170" font-size="15" fill="#7a3a8a" font-family="Liberation Serif">ε</text><rect x="119" y="167" width="6" height="6" fill="#aaa"/><path d="M131,163.5 H140 L135.5,168 Z" fill="#333"/><g stroke="#999" stroke-width="0.8" fill="none"><line x1="149" y1="159" x2="149" y2="173"/><line x1="149" y1="162" x2="152" y2="162"/><line x1="149" y1="168" x2="152" y2="168"/></g><rect x="151" y="160.5" width="3" height="3" fill="#f08a30"/><rect x="151" y="166.5" width="3" height="3" fill="#f08a30"/><path d="M156,158 H160 V165 H163 L158,171 L153,165 H156 Z" fill="#5c8fcc" stroke="#3f6ea8" stroke-width="0.6"/><path d="M184.5,163 L187,165.5 L184.5,168 M188,163 L190.5,165.5 L188,168" fill="none" stroke="#111" stroke-width="1.4"/><rect x="171.5" y="136.5" width="10.5" height="10.5" rx="2" fill="none" stroke="#666" stroke-width="1"/><path d="M175.5,140 V138.8 Q175.5,138.2 176.2,138.2 H179 Q179.6,138.2 179.6,138.8 V141.8 Q179.6,142.4 179,142.4 H178" fill="none" stroke="#666" stroke-width="0.9"/><rect x="173.6" y="140.3" width="4.2" height="4.3" rx="1" fill="none" stroke="#666" stroke-width="0.9"/><rect x="185.5" y="136.5" width="10.5" height="10" rx="2" fill="none" stroke="#6e6e6e" stroke-width="1"/><path d="M188,139 L193.5,144.5 M193.5,139 L188,144.5" stroke="#555" stroke-width="1.8"/>
<circle cx="19.5" cy="625" r="3.8" fill="none" stroke="#888" stroke-width="1.3"/><line x1="22.3" y1="627.8" x2="26" y2="631.5" stroke="#888" stroke-width="1.6"/><g transform="rotate(-38 510 628.5)"><rect x="505" y="620.5" width="10" height="16" rx="5" fill="#fff" stroke="#111" stroke-width="1.1"/><path d="M505,628 V625.5 Q505,620.5 510,620.5 Q515,620.5 515,625.5 V628 Z" fill="#1a1a1a"/><line x1="508" y1="622.5" x2="508" y2="627" stroke="#fff" stroke-width="1.1"/><line x1="511.5" y1="622" x2="511.5" y2="627" stroke="#eee" stroke-width="0.9"/><circle cx="510" cy="632" r="1.8" fill="none" stroke="#222" stroke-width="1"/></g><path d="M514,621 L517,619" stroke="#555" stroke-width="0.9"/><path d="M502.5,629.5 L504,629" stroke="#555" stroke-width="0.9"/><path d="M656.5,626 V623.5 Q656.5,620 660,620 Q663.5,620 663.5,623.5 V626" fill="none" stroke="#6a6a6a" stroke-width="1.8"/><rect x="654.5" y="626" width="11.5" height="8.5" rx="1" fill="#6a6a6a"/><path d="M802.0,622 L805.5,625.5 H798.5 Z" fill="#555"/><path d="M802.0,634 L805.5,630.5 H798.5 Z" fill="#555"/><path d="M944.0,622 L947.5,625.5 H940.5 Z" fill="#555"/><path d="M944.0,634 L947.5,630.5 H940.5 Z" fill="#555"/><path d="M627,626 H635 L631,630.5 Z" fill="#555"/><rect x="958.5" y="621.5" width="12.5" height="12.5" fill="#fff" stroke="#a5a29c"/><path d="M961,628 L963.5,631.5 L968.5,624" fill="none" stroke="#111" stroke-width="1.6"/><g fill="none" stroke="#777" stroke-width="0.9"><circle cx="1042" cy="627.5" r="7"/><ellipse cx="1042" cy="627.5" rx="3" ry="7"/><line x1="1035" y1="627.5" x2="1049" y2="627.5"/><line x1="1036" y1="624" x2="1048" y2="624"/><line x1="1036" y1="631" x2="1048" y2="631"/></g><ellipse cx="1140" cy="627" rx="8" ry="6.5" fill="#666"/><path d="M1142,632 L1147,636 L1146,631 Z" fill="#666"/><circle cx="1136.5" cy="627" r="1.2" fill="#fff"/><circle cx="1140" cy="627" r="1.2" fill="#fff"/><circle cx="1143.5" cy="627" r="1.2" fill="#fff"/><rect x="1174" y="640" width="1" height="1" fill="#c9c6c0"/><rect x="1171" y="640" width="1" height="1" fill="#c9c6c0"/><rect x="1168" y="640" width="1" height="1" fill="#c9c6c0"/><rect x="1174" y="637" width="1" height="1" fill="#c9c6c0"/><rect x="1171" y="637" width="1" height="1" fill="#c9c6c0"/><rect x="1174" y="634" width="1" height="1" fill="#c9c6c0"/>
<circle cx="1124" cy="16.7" r="8" fill="url(#wbg)" stroke="#33322e"/>
<circle cx="1144" cy="16.7" r="8" fill="url(#wbg)" stroke="#33322e"/>
<circle cx="1164" cy="16.7" r="8" fill="url(#wbc)" stroke="#3a2a20"/>
<defs><linearGradient id="wbg" x1="0" y1="0" x2="0" y2="1"><stop offset="0" stop-color="#7b7973"/><stop offset="1" stop-color="#55534e"/></linearGradient>
<linearGradient id="wbc" x1="0" y1="0" x2="0" y2="1"><stop offset="0" stop-color="#f2774c"/><stop offset="1" stop-color="#dc4a1b"/></linearGradient></defs>
<line x1="1120" y1="17.2" x2="1128" y2="17.2" stroke="#2e2d29" stroke-width="1.5"/>
<rect x="1140.5" y="13.2" width="7" height="7" fill="none" stroke="#2e2d29" stroke-width="1.3"/>
<path d="M1160.5,13.2 L1167.5,20.2 M1167.5,13.2 L1160.5,20.2" stroke="#2e2d29" stroke-width="1.5"/>
<rect x="201" y="365" width="1" height="1" fill="#9a9893"/><rect x="201" y="368" width="1" height="1" fill="#9a9893"/><rect x="201" y="371" width="1" height="1" fill="#9a9893"/><rect x="201" y="374" width="1" height="1" fill="#9a9893"/><rect x="201" y="377" width="1" height="1" fill="#9a9893"/><rect x="201" y="380" width="1" height="1" fill="#9a9893"/>
</svg>
</body></html>
